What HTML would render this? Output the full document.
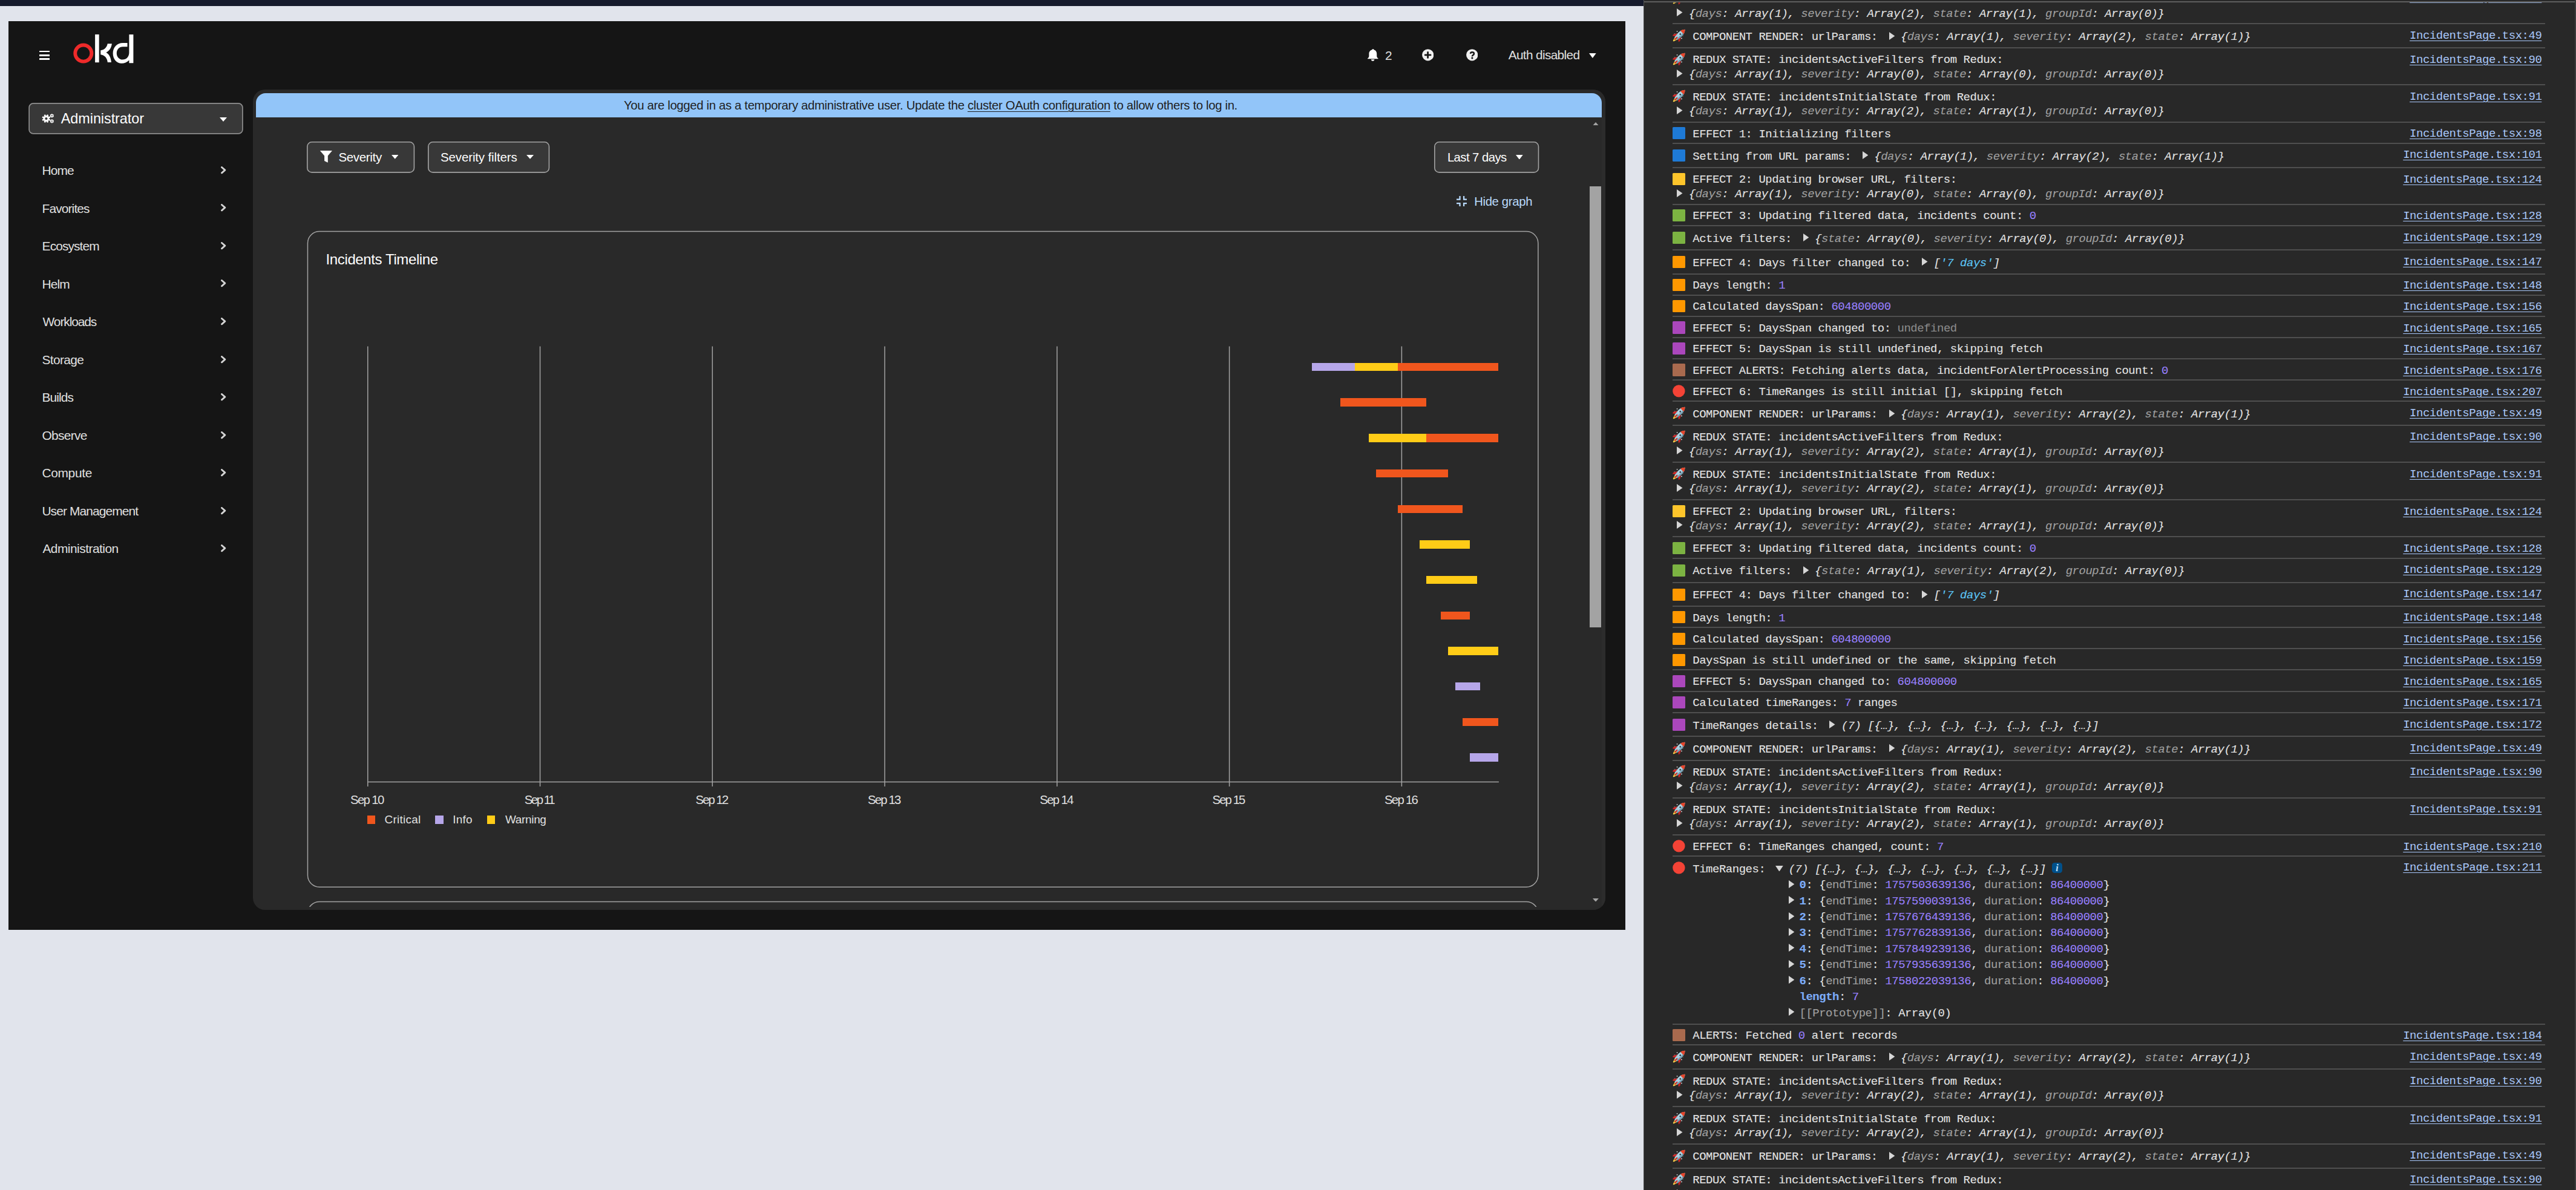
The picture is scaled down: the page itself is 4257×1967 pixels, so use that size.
<!DOCTYPE html>
<html><head><meta charset="utf-8"><title>OKD Incidents</title>
<style>
html,body{margin:0;padding:0}
body{width:4257px;height:1967px;position:relative;overflow:hidden;background:#e1e4ec;font-family:'Liberation Sans', sans-serif}
</style></head><body>
<div style="position:absolute;left:0;top:0;width:2716px;height:10.4px;background:#161a2c"></div>
<div style="position:absolute;left:14.00px;top:35.00px;width:2672.00px;height:1502.00px;background:#151515"></div>
<div style="position:absolute;left:64.80px;top:83.60px;width:17.30px;height:2.90px;background:#fff;border-radius:0.5px"></div>
<div style="position:absolute;left:64.80px;top:89.80px;width:17.30px;height:2.90px;background:#fff;border-radius:0.5px"></div>
<div style="position:absolute;left:64.80px;top:95.90px;width:17.30px;height:2.90px;background:#fff;border-radius:0.5px"></div>
<svg style="position:absolute;left:0;top:0" width="240" height="120" viewBox="0 0 240 120">
<circle cx="137.8" cy="88.1" r="13.55" fill="none" stroke="#ee2a2a" stroke-width="5.9"/>
<rect x="157.1" y="56.9" width="6.6" height="46.3" fill="#fff"/>
<path d="M166.3 83.2 C171.8 82.6 176.8 78.5 177.7 72.2 L184.9 72.2 C184 79.5 180.2 84.4 175.4 86.7 C180.3 89.3 183.4 95.5 183.9 102.9 L177.8 102.9 C177.2 95.8 172.6 90.9 166.3 90.3 Z" fill="#fff"/>
<path d="M213.4 57 L220.4 57 L220.4 104.2 L213.4 104.2 L213.4 99.5 C210 103 205.5 104.8 201 104.8 C192.5 104.8 186.6 97.5 186.6 88 C186.6 78 193.5 71 203 71 L210.5 71 L210.5 77.2 L203 77.2 C197 77.2 192.8 81.8 192.8 88 C192.8 94 197 98.6 202.5 98.6 C209 98.6 213.4 93.5 213.4 87 Z" fill="#fff"/>
</svg>
<svg style="position:absolute;left:2259.7px;top:80.9px" width="18" height="20" viewBox="0 0 18 20">
<path d="M9 0 C9.8 0 10.3 0.6 10.3 1.3 C13.3 2 15.2 4.6 15.2 7.8 L15.2 12 C15.2 13.3 16.5 14.8 17.6 15.6 L17.6 16.3 L0 16.3 L0 15.6 C1.1 14.8 2.4 13.3 2.4 12 L2.4 7.8 C2.4 4.6 4.5 2 7.7 1.3 C7.7 0.6 8.2 0 9 0 Z" fill="#fff"/>
<path d="M5.8 17.2 L11.4 17.2 C11.2 18.8 10.1 19.8 8.6 19.8 C7.1 19.8 6 18.8 5.8 17.2 Z" fill="#fff"/>
</svg>
<div style="position:absolute;left:2289.00px;top:77.09px;font-family:'Liberation Sans', sans-serif;font-size:20.8px;line-height:30px;color:#e0e0e0;font-weight:400;font-style:normal;letter-spacing:0.0px;white-space:pre;">2</div>
<svg style="position:absolute;left:2349.9px;top:81px" width="19.4" height="19.6" viewBox="0 0 19.4 19.6">
<circle cx="9.7" cy="9.8" r="9.65" fill="#f0f0f0"/>
<path d="M5.1 9.9 L14.1 9.9 M9.6 5.3 L9.6 14.5" stroke="#151515" stroke-width="2.7" stroke-linecap="round" fill="none"/>
</svg>
<svg style="position:absolute;left:2422.8px;top:81px" width="19.4" height="19.6" viewBox="0 0 19.4 19.6">
<circle cx="9.7" cy="9.8" r="9.65" fill="#f0f0f0"/>
<path d="M7.1 7.7 C7.1 5.9 8.4 5.2 9.9 5.2 C11.6 5.2 12.9 6.2 12.9 7.7 C12.9 9.2 11.8 9.8 10.9 10.4 C10.2 10.9 9.9 11.3 9.9 12.2" stroke="#151515" stroke-width="2.5" stroke-linecap="butt" fill="none"/>
<circle cx="9.9" cy="14.9" r="1.55" fill="#151515"/>
</svg>
<div style="position:absolute;left:2492.70px;top:76.39px;font-family:'Liberation Sans', sans-serif;font-size:20.8px;line-height:30px;color:#e0e0e0;font-weight:400;font-style:normal;letter-spacing:-0.642px;white-space:pre;">Auth disabled</div>
<svg style="position:absolute;left:2626.00px;top:88.00px" width="11.70" height="8.00" viewBox="0 0 10 6" preserveAspectRatio="none"><path d="M0 0 L10 0 L5 6 Z" fill="#fff"/></svg>
<svg style="position:absolute;left:0;top:0" width="420" height="240"><rect x="48.15" y="170.85" width="352.7" height="50.1" rx="6.8" fill="#383838" stroke="#8f8f8f" stroke-width="1.7"/></svg>
<svg style="position:absolute;left:66px;top:185px" width="24" height="21" viewBox="0 0 24 21">
<defs><mask id="gm"><rect width="24" height="21" fill="#fff"/><circle cx="10.4" cy="11" r="2.1" fill="#000"/><circle cx="19.8" cy="6.3" r="1.05" fill="#000"/><circle cx="19.8" cy="15.3" r="1.05" fill="#000"/></mask></defs>
<g fill="#fff" mask="url(#gm)"><circle cx="10.4" cy="11" r="5.0"/><rect x="9.05" y="4.10" width="2.7" height="2.70" rx="0.4" transform="rotate(22.5 10.4 11)"/><rect x="9.05" y="4.10" width="2.7" height="2.70" rx="0.4" transform="rotate(67.5 10.4 11)"/><rect x="9.05" y="4.10" width="2.7" height="2.70" rx="0.4" transform="rotate(112.5 10.4 11)"/><rect x="9.05" y="4.10" width="2.7" height="2.70" rx="0.4" transform="rotate(157.5 10.4 11)"/><rect x="9.05" y="4.10" width="2.7" height="2.70" rx="0.4" transform="rotate(202.5 10.4 11)"/><rect x="9.05" y="4.10" width="2.7" height="2.70" rx="0.4" transform="rotate(247.5 10.4 11)"/><rect x="9.05" y="4.10" width="2.7" height="2.70" rx="0.4" transform="rotate(292.5 10.4 11)"/><rect x="9.05" y="4.10" width="2.7" height="2.70" rx="0.4" transform="rotate(337.5 10.4 11)"/><circle cx="19.8" cy="6.3" r="2.5"/><rect x="19.05" y="3.00" width="1.5" height="1.60" rx="0.4" transform="rotate(0.0 19.8 6.3)"/><rect x="19.05" y="3.00" width="1.5" height="1.60" rx="0.4" transform="rotate(60.0 19.8 6.3)"/><rect x="19.05" y="3.00" width="1.5" height="1.60" rx="0.4" transform="rotate(120.0 19.8 6.3)"/><rect x="19.05" y="3.00" width="1.5" height="1.60" rx="0.4" transform="rotate(180.0 19.8 6.3)"/><rect x="19.05" y="3.00" width="1.5" height="1.60" rx="0.4" transform="rotate(240.0 19.8 6.3)"/><rect x="19.05" y="3.00" width="1.5" height="1.60" rx="0.4" transform="rotate(300.0 19.8 6.3)"/><circle cx="19.8" cy="15.3" r="2.5"/><rect x="19.05" y="12.00" width="1.5" height="1.60" rx="0.4" transform="rotate(0.0 19.8 15.3)"/><rect x="19.05" y="12.00" width="1.5" height="1.60" rx="0.4" transform="rotate(60.0 19.8 15.3)"/><rect x="19.05" y="12.00" width="1.5" height="1.60" rx="0.4" transform="rotate(120.0 19.8 15.3)"/><rect x="19.05" y="12.00" width="1.5" height="1.60" rx="0.4" transform="rotate(180.0 19.8 15.3)"/><rect x="19.05" y="12.00" width="1.5" height="1.60" rx="0.4" transform="rotate(240.0 19.8 15.3)"/><rect x="19.05" y="12.00" width="1.5" height="1.60" rx="0.4" transform="rotate(300.0 19.8 15.3)"/></g>
</svg>
<div style="position:absolute;left:100.80px;top:180.79px;font-family:'Liberation Sans', sans-serif;font-size:23.4px;line-height:30px;color:#ffffff;font-weight:400;font-style:normal;letter-spacing:-0.05px;white-space:pre;">Administrator</div>
<svg style="position:absolute;left:363.00px;top:193.50px" width="12.00" height="7.00" viewBox="0 0 10 6" preserveAspectRatio="none"><path d="M0 0 L10 0 L5 6 Z" fill="#fff"/></svg>
<div style="position:absolute;left:69.60px;top:266.96px;font-family:'Liberation Sans', sans-serif;font-size:20.9px;line-height:30px;color:#e0e0e0;font-weight:400;font-style:normal;letter-spacing:-0.867px;white-space:pre;">Home</div>
<svg style="position:absolute;left:364.9px;top:274.80px" width="9" height="13" viewBox="0 0 9 13"><path d="M1.5 1.5 L6.8 6.15 L1.5 10.8" fill="none" stroke="#d4d4d4" stroke-width="2.9" stroke-linecap="round" stroke-linejoin="round"/></svg>
<div style="position:absolute;left:69.60px;top:329.51px;font-family:'Liberation Sans', sans-serif;font-size:20.9px;line-height:30px;color:#e0e0e0;font-weight:400;font-style:normal;letter-spacing:-0.875px;white-space:pre;">Favorites</div>
<svg style="position:absolute;left:364.9px;top:337.35px" width="9" height="13" viewBox="0 0 9 13"><path d="M1.5 1.5 L6.8 6.15 L1.5 10.8" fill="none" stroke="#d4d4d4" stroke-width="2.9" stroke-linecap="round" stroke-linejoin="round"/></svg>
<div style="position:absolute;left:69.60px;top:392.06px;font-family:'Liberation Sans', sans-serif;font-size:20.9px;line-height:30px;color:#e0e0e0;font-weight:400;font-style:normal;letter-spacing:-0.9px;white-space:pre;">Ecosystem</div>
<svg style="position:absolute;left:364.9px;top:399.90px" width="9" height="13" viewBox="0 0 9 13"><path d="M1.5 1.5 L6.8 6.15 L1.5 10.8" fill="none" stroke="#d4d4d4" stroke-width="2.9" stroke-linecap="round" stroke-linejoin="round"/></svg>
<div style="position:absolute;left:69.60px;top:454.61px;font-family:'Liberation Sans', sans-serif;font-size:20.9px;line-height:30px;color:#e0e0e0;font-weight:400;font-style:normal;letter-spacing:-0.9px;white-space:pre;">Helm</div>
<svg style="position:absolute;left:364.9px;top:462.45px" width="9" height="13" viewBox="0 0 9 13"><path d="M1.5 1.5 L6.8 6.15 L1.5 10.8" fill="none" stroke="#d4d4d4" stroke-width="2.9" stroke-linecap="round" stroke-linejoin="round"/></svg>
<div style="position:absolute;left:70.60px;top:517.16px;font-family:'Liberation Sans', sans-serif;font-size:20.9px;line-height:30px;color:#e0e0e0;font-weight:400;font-style:normal;letter-spacing:-1.075px;white-space:pre;">Workloads</div>
<svg style="position:absolute;left:364.9px;top:525.00px" width="9" height="13" viewBox="0 0 9 13"><path d="M1.5 1.5 L6.8 6.15 L1.5 10.8" fill="none" stroke="#d4d4d4" stroke-width="2.9" stroke-linecap="round" stroke-linejoin="round"/></svg>
<div style="position:absolute;left:69.60px;top:579.71px;font-family:'Liberation Sans', sans-serif;font-size:20.9px;line-height:30px;color:#e0e0e0;font-weight:400;font-style:normal;letter-spacing:-0.667px;white-space:pre;">Storage</div>
<svg style="position:absolute;left:364.9px;top:587.55px" width="9" height="13" viewBox="0 0 9 13"><path d="M1.5 1.5 L6.8 6.15 L1.5 10.8" fill="none" stroke="#d4d4d4" stroke-width="2.9" stroke-linecap="round" stroke-linejoin="round"/></svg>
<div style="position:absolute;left:69.40px;top:642.26px;font-family:'Liberation Sans', sans-serif;font-size:20.9px;line-height:30px;color:#e0e0e0;font-weight:400;font-style:normal;letter-spacing:-0.88px;white-space:pre;">Builds</div>
<svg style="position:absolute;left:364.9px;top:650.10px" width="9" height="13" viewBox="0 0 9 13"><path d="M1.5 1.5 L6.8 6.15 L1.5 10.8" fill="none" stroke="#d4d4d4" stroke-width="2.9" stroke-linecap="round" stroke-linejoin="round"/></svg>
<div style="position:absolute;left:69.40px;top:704.81px;font-family:'Liberation Sans', sans-serif;font-size:20.9px;line-height:30px;color:#e0e0e0;font-weight:400;font-style:normal;letter-spacing:-0.667px;white-space:pre;">Observe</div>
<svg style="position:absolute;left:364.9px;top:712.65px" width="9" height="13" viewBox="0 0 9 13"><path d="M1.5 1.5 L6.8 6.15 L1.5 10.8" fill="none" stroke="#d4d4d4" stroke-width="2.9" stroke-linecap="round" stroke-linejoin="round"/></svg>
<div style="position:absolute;left:69.40px;top:767.36px;font-family:'Liberation Sans', sans-serif;font-size:20.9px;line-height:30px;color:#e0e0e0;font-weight:400;font-style:normal;letter-spacing:-0.3px;white-space:pre;">Compute</div>
<svg style="position:absolute;left:364.9px;top:775.20px" width="9" height="13" viewBox="0 0 9 13"><path d="M1.5 1.5 L6.8 6.15 L1.5 10.8" fill="none" stroke="#d4d4d4" stroke-width="2.9" stroke-linecap="round" stroke-linejoin="round"/></svg>
<div style="position:absolute;left:69.40px;top:829.91px;font-family:'Liberation Sans', sans-serif;font-size:20.9px;line-height:30px;color:#e0e0e0;font-weight:400;font-style:normal;letter-spacing:-0.871px;white-space:pre;">User Management</div>
<svg style="position:absolute;left:364.9px;top:837.75px" width="9" height="13" viewBox="0 0 9 13"><path d="M1.5 1.5 L6.8 6.15 L1.5 10.8" fill="none" stroke="#d4d4d4" stroke-width="2.9" stroke-linecap="round" stroke-linejoin="round"/></svg>
<div style="position:absolute;left:70.40px;top:892.46px;font-family:'Liberation Sans', sans-serif;font-size:20.9px;line-height:30px;color:#e0e0e0;font-weight:400;font-style:normal;letter-spacing:-0.508px;white-space:pre;">Administration</div>
<svg style="position:absolute;left:364.9px;top:900.30px" width="9" height="13" viewBox="0 0 9 13"><path d="M1.5 1.5 L6.8 6.15 L1.5 10.8" fill="none" stroke="#d4d4d4" stroke-width="2.9" stroke-linecap="round" stroke-linejoin="round"/></svg>
<div style="position:absolute;left:418px;top:147.5px;width:2234.7px;height:1356.4px;background:#292929;border-radius:20px;overflow:hidden"><div style="position:absolute;left:2229.4px;top:46.2px;width:5.3px;height:1400px;background:#2c2c2c"></div></div>
<div style="position:absolute;left:423.4px;top:153.5px;width:2224px;height:40.2px;background:#92c5f9;border-radius:16px 16px 0 0"></div>
<div style="position:absolute;left:1031.00px;top:159.17px;font-family:'Liberation Sans', sans-serif;font-size:20.3px;line-height:30px;color:#1f1f1f;font-weight:400;font-style:normal;letter-spacing:-0.322px;white-space:pre;">You are logged in as a temporary administrative user. Update the <u style="text-decoration-thickness:1px;text-underline-offset:3px">cluster OAuth configuration</u> to allow others to log in.</div>
<svg style="position:absolute;left:2631.8px;top:201.8px" width="10" height="5.6" viewBox="0 0 10 6" preserveAspectRatio="none"><path d="M0 6 L10 6 L5 0 Z" fill="#a3a3a3"/></svg>
<div style="position:absolute;left:2627.40px;top:308.20px;width:18.40px;height:728.80px;background:#a3a3a3"></div>
<svg style="position:absolute;left:2631.70px;top:1484.60px" width="9.90" height="5.60" viewBox="0 0 10 6" preserveAspectRatio="none"><path d="M0 0 L10 0 L5 6 Z" fill="#a3a3a3"/></svg>
<svg style="position:absolute;left:504.9px;top:231.5px" width="182.20" height="55.70"><rect x="2.8" y="2.8" width="176.60" height="50.10" rx="7.5" fill="#383838" stroke="#a3a3a3" stroke-width="1.6"/></svg>
<svg style="position:absolute;left:704.8px;top:231.5px" width="205.20" height="55.70"><rect x="2.8" y="2.8" width="199.60" height="50.10" rx="7.5" fill="#383838" stroke="#a3a3a3" stroke-width="1.6"/></svg>
<svg style="position:absolute;left:2367.6px;top:231.5px" width="177.30" height="55.70"><rect x="2.8" y="2.8" width="171.70" height="50.10" rx="7.5" fill="#383838" stroke="#a3a3a3" stroke-width="1.6"/></svg>
<svg style="position:absolute;left:529.3px;top:249px" width="20" height="20" viewBox="0 0 20 20"><path d="M0.4 0 L19.4 0 Q19.95 0 19.6 0.6 L12.8 8.4 L12.8 19.8 L7.1 16.9 L7.1 8.4 L0.2 0.6 Q-0.15 0 0.4 0 Z" fill="#fff"/></svg>
<div style="position:absolute;left:559.40px;top:244.70px;font-family:'Liberation Sans', sans-serif;font-size:20.5px;line-height:30px;color:#ffffff;font-weight:400;font-style:normal;letter-spacing:-0.314px;white-space:pre;">Severity</div>
<svg style="position:absolute;left:646.70px;top:256.30px" width="11.50" height="6.80" viewBox="0 0 10 6" preserveAspectRatio="none"><path d="M0 0 L10 0 L5 6 Z" fill="#fff"/></svg>
<div style="position:absolute;left:728.00px;top:244.70px;font-family:'Liberation Sans', sans-serif;font-size:20.5px;line-height:30px;color:#ffffff;font-weight:400;font-style:normal;letter-spacing:-0.133px;white-space:pre;">Severity filters</div>
<svg style="position:absolute;left:870.00px;top:256.30px" width="12.00" height="6.80" viewBox="0 0 10 6" preserveAspectRatio="none"><path d="M0 0 L10 0 L5 6 Z" fill="#fff"/></svg>
<div style="position:absolute;left:2391.90px;top:244.57px;font-family:'Liberation Sans', sans-serif;font-size:20.3px;line-height:30px;color:#ffffff;font-weight:400;font-style:normal;letter-spacing:-0.55px;white-space:pre;">Last 7 days</div>
<svg style="position:absolute;left:2505.30px;top:255.50px" width="11.70" height="7.70" viewBox="0 0 10 6" preserveAspectRatio="none"><path d="M0 0 L10 0 L5 6 Z" fill="#fff"/></svg>
<svg style="position:absolute;left:2406.7px;top:323.9px" width="17.6" height="17.6" viewBox="0 0 18 18">
<g fill="#b9dafc">
<path d="M4.5 0 L6.8 0 L6.8 6.8 L0 6.8 L0 4.5 L4.5 4.5 Z"/>
<path d="M11.2 0 L13.5 0 L13.5 4.5 L18 4.5 L18 6.8 L11.2 6.8 Z"/>
<path d="M0 11.2 L6.8 11.2 L6.8 18 L4.5 18 L4.5 13.5 L0 13.5 Z"/>
<path d="M11.2 11.2 L18 11.2 L18 13.5 L13.5 13.5 L13.5 18 L11.2 18 Z"/>
</g></svg>
<div style="position:absolute;left:2436.20px;top:318.47px;font-family:'Liberation Sans', sans-serif;font-size:20.3px;line-height:30px;color:#b9dafc;font-weight:400;font-style:normal;letter-spacing:-0.333px;white-space:pre;">Hide graph</div>
<svg style="position:absolute;left:500px;top:370px" width="2050" height="1110"><rect x="8.45" y="12.45" width="2033.4" height="1083.7" rx="19.5" fill="none" stroke="#a3a3a3" stroke-width="1.5"/></svg>
<div style="position:absolute;left:538.60px;top:414.28px;font-family:'Liberation Sans', sans-serif;font-size:24.0px;line-height:30px;color:#ffffff;font-weight:400;font-style:normal;letter-spacing:-0.388px;white-space:pre;">Incidents Timeline</div>
<svg style="position:absolute;left:0;top:0" width="2600" height="1320"><g stroke="#a3a3a3" stroke-width="1.5" fill="none"><line x1="607.75" y1="572.4" x2="607.75" y2="1300"/><line x1="892.52" y1="572.4" x2="892.52" y2="1300"/><line x1="1177.29" y1="572.4" x2="1177.29" y2="1300"/><line x1="1462.06" y1="572.4" x2="1462.06" y2="1300"/><line x1="1746.83" y1="572.4" x2="1746.83" y2="1300"/><line x1="2031.60" y1="572.4" x2="2031.60" y2="1300"/><line x1="2316.37" y1="572.4" x2="2316.37" y2="1300"/><line x1="607" y1="1292.6" x2="2476.9" y2="1292.6"/></g></svg>
<div style="position:absolute;left:579.00px;top:1307.47px;font-family:'Liberation Sans', sans-serif;font-size:20.3px;line-height:30px;color:#e0e0e0;font-weight:400;font-style:normal;letter-spacing:-1.6px;white-space:pre;">Sep 10</div>
<div style="position:absolute;left:866.70px;top:1307.47px;font-family:'Liberation Sans', sans-serif;font-size:20.3px;line-height:30px;color:#e0e0e0;font-weight:400;font-style:normal;letter-spacing:-2.4px;white-space:pre;">Sep 11</div>
<div style="position:absolute;left:1149.50px;top:1307.47px;font-family:'Liberation Sans', sans-serif;font-size:20.3px;line-height:30px;color:#e0e0e0;font-weight:400;font-style:normal;letter-spacing:-1.9px;white-space:pre;">Sep 12</div>
<div style="position:absolute;left:1434.00px;top:1307.47px;font-family:'Liberation Sans', sans-serif;font-size:20.3px;line-height:30px;color:#e0e0e0;font-weight:400;font-style:normal;letter-spacing:-1.8px;white-space:pre;">Sep 13</div>
<div style="position:absolute;left:1718.20px;top:1307.47px;font-family:'Liberation Sans', sans-serif;font-size:20.3px;line-height:30px;color:#e0e0e0;font-weight:400;font-style:normal;letter-spacing:-1.58px;white-space:pre;">Sep 14</div>
<div style="position:absolute;left:2003.50px;top:1307.47px;font-family:'Liberation Sans', sans-serif;font-size:20.3px;line-height:30px;color:#e0e0e0;font-weight:400;font-style:normal;letter-spacing:-1.88px;white-space:pre;">Sep 15</div>
<div style="position:absolute;left:2288.00px;top:1307.47px;font-family:'Liberation Sans', sans-serif;font-size:20.3px;line-height:30px;color:#e0e0e0;font-weight:400;font-style:normal;letter-spacing:-1.68px;white-space:pre;">Sep 16</div>
<div style="position:absolute;left:606.60px;top:1348.00px;width:13.50px;height:13.50px;background:#f0561d"></div>
<div style="position:absolute;left:635.60px;top:1339.65px;font-family:'Liberation Sans', sans-serif;font-size:18.9px;line-height:30px;color:#e0e0e0;font-weight:400;font-style:normal;letter-spacing:0.257px;white-space:pre;">Critical</div>
<div style="position:absolute;left:719.30px;top:1348.00px;width:13.50px;height:13.50px;background:#b6a6e9"></div>
<div style="position:absolute;left:748.30px;top:1339.65px;font-family:'Liberation Sans', sans-serif;font-size:18.9px;line-height:30px;color:#e0e0e0;font-weight:400;font-style:normal;letter-spacing:0.233px;white-space:pre;">Info</div>
<div style="position:absolute;left:804.90px;top:1348.00px;width:13.50px;height:13.50px;background:#ffcc17"></div>
<div style="position:absolute;left:835.00px;top:1339.65px;font-family:'Liberation Sans', sans-serif;font-size:18.9px;line-height:30px;color:#e0e0e0;font-weight:400;font-style:normal;letter-spacing:-0.3px;white-space:pre;">Warning</div>
<div style="position:absolute;left:2167.60px;top:599.80px;width:71.10px;height:13.40px;background:#b6a6e9"></div>
<div style="position:absolute;left:2238.70px;top:599.80px;width:71.30px;height:13.40px;background:#ffcc17"></div>
<div style="position:absolute;left:2310.00px;top:599.80px;width:166.00px;height:13.40px;background:#f0561d"></div>
<div style="position:absolute;left:2215.00px;top:658.49px;width:142.40px;height:13.40px;background:#f0561d"></div>
<div style="position:absolute;left:2262.00px;top:717.18px;width:95.20px;height:13.40px;background:#ffcc17"></div>
<div style="position:absolute;left:2357.20px;top:717.18px;width:118.80px;height:13.40px;background:#f0561d"></div>
<div style="position:absolute;left:2274.00px;top:775.87px;width:119.00px;height:13.40px;background:#f0561d"></div>
<div style="position:absolute;left:2309.90px;top:834.56px;width:106.80px;height:13.40px;background:#f0561d"></div>
<div style="position:absolute;left:2345.70px;top:893.25px;width:83.10px;height:13.40px;background:#ffcc17"></div>
<div style="position:absolute;left:2357.30px;top:951.94px;width:83.40px;height:13.40px;background:#ffcc17"></div>
<div style="position:absolute;left:2381.00px;top:1010.63px;width:47.80px;height:13.40px;background:#f0561d"></div>
<div style="position:absolute;left:2393.00px;top:1069.32px;width:83.00px;height:13.40px;background:#ffcc17"></div>
<div style="position:absolute;left:2404.60px;top:1128.01px;width:41.90px;height:13.40px;background:#b6a6e9"></div>
<div style="position:absolute;left:2416.70px;top:1186.70px;width:59.30px;height:13.40px;background:#f0561d"></div>
<div style="position:absolute;left:2428.60px;top:1245.39px;width:47.40px;height:13.40px;background:#b6a6e9"></div>
<svg style="position:absolute;left:500px;top:1480px" width="2050" height="18.9"><rect x="8.45" y="10.4" width="2033.4" height="300" rx="19.5" fill="none" stroke="#a3a3a3" stroke-width="1.5"/></svg>
<div style="position:absolute;left:2716px;top:0;width:1541px;height:1967px;background:#282828;overflow:hidden">
</div>
<div style="position:absolute;left:2716.00px;top:0.00px;width:1.20px;height:1967.00px;background:#4f4f4f"></div>
<div style="position:absolute;left:2717.00px;top:2.00px;width:1540.00px;height:2.20px;background:#5e5e5e"></div>
<div style="position:absolute;left:4254.50px;top:0.00px;width:2.50px;height:1967.00px;background:#3c3c3c"></div>
<div style="position:absolute;left:0;top:0;width:4257px;height:1967px;clip-path:inset(4.2px 0 0 2717.2px)">
<div style="position:absolute;left:2763.60px;top:7.54px;font-family:'Liberation Mono', monospace;font-size:19.0px;letter-spacing:-0.492px;line-height:30px;white-space:pre;color:#e3e3e3;-webkit-text-stroke:0.1px"><span style="display:inline-block;width:27.2px;height:1px;position:relative"><svg style="position:absolute;left:7.9px;top:-12.5px" width="9.5" height="13" viewBox="0 0 10 14" preserveAspectRatio="none"><path d="M0 0 L10 7 L0 14 Z" fill="#d6d6d6"/></svg></span><span style="color:#e3e3e3;font-style:italic;">{</span><span style="color:#a0a0a0;font-style:italic;">days</span><span style="color:#e3e3e3;font-style:italic;">: </span><span style="color:#e3e3e3;font-style:italic;">Array(1)</span><span style="color:#e3e3e3;font-style:italic;">, </span><span style="color:#a0a0a0;font-style:italic;">severity</span><span style="color:#e3e3e3;font-style:italic;">: </span><span style="color:#e3e3e3;font-style:italic;">Array(2)</span><span style="color:#e3e3e3;font-style:italic;">, </span><span style="color:#a0a0a0;font-style:italic;">state</span><span style="color:#e3e3e3;font-style:italic;">: </span><span style="color:#e3e3e3;font-style:italic;">Array(1)</span><span style="color:#e3e3e3;font-style:italic;">, </span><span style="color:#a0a0a0;font-style:italic;">groupId</span><span style="color:#e3e3e3;font-style:italic;">: </span><span style="color:#e3e3e3;font-style:italic;">Array(0)</span><span style="color:#e3e3e3;font-style:italic;">}</span></div>
<div style="position:absolute;left:3982.10px;top:-19.36px;font-family:'Liberation Mono', monospace;font-size:19.0px;letter-spacing:-0.492px;line-height:30px;white-space:pre;color:#a8c7fa;text-decoration:underline;text-decoration-thickness:1px;text-underline-offset:2.5px">IncidentsPage.tsx:91</div>
<svg style="position:absolute;left:2761.8px;top:-15.20px" width="23" height="23" viewBox="0 0 23 23">
<circle cx="9.6" cy="4.8" r="0.9" fill="#e8e8e8"/><circle cx="5.3" cy="8.6" r="0.7" fill="#9a9a9a"/><circle cx="7.6" cy="8.4" r="0.5" fill="#777"/><circle cx="16.9" cy="16.4" r="0.9" fill="#e8e8e8"/><circle cx="19.1" cy="12.2" r="0.6" fill="#888"/>
<g transform="translate(13.6,10.6) rotate(45) scale(0.93)">
<path d="M-4.3 0.5 L-8.2 7 L-7.8 10.2 L-3.6 7.2 Z" fill="#d42a2a"/>
<path d="M4.3 0.5 L8.2 7 L7.8 10.2 L3.6 7.2 Z" fill="#c62323"/>
<path d="M-2.9 9 L2.9 9 L0.8 15.8 L-0.8 15.8 Z" fill="#fcd94a"/>
<path d="M0 -13.5 C3.2 -10.5 4.5 -5.5 4.5 -1 L3.4 9.2 L-3.4 9.2 L-4.5 -1 C-4.5 -5.5 -3.2 -10.5 0 -13.5 Z" fill="#a9d2e3"/>
<path d="M0.6 -12.8 C3.3 -9.8 4.5 -5.2 4.5 -1 L3.4 9.2 L1.2 9.2 C2.2 3 2.2 -6 0.6 -12.8 Z" fill="#6f9fb5"/>
<path d="M0 -13.5 C2.3 -11.3 3.6 -8.8 4.1 -6.2 L-4.1 -6.2 C-3.6 -8.8 -2.3 -11.3 0 -13.5 Z" fill="#e5452b"/>
<circle cx="0" cy="-1.8" r="2.1" fill="#2a4858" stroke="#d8ecf3" stroke-width="0.9"/>
<path d="M-1.1 5.5 L1.1 5.5 L1.1 12.5 L-1.1 12.5 Z" fill="#cf2a2a"/>
</g>
</svg>
<div style="position:absolute;left:2763.60px;top:38.00px;width:1442.60px;height:2.00px;background:#4f4f4f"></div>
<svg style="position:absolute;left:2761.8px;top:47.30px" width="23" height="23" viewBox="0 0 23 23">
<circle cx="9.6" cy="4.8" r="0.9" fill="#e8e8e8"/><circle cx="5.3" cy="8.6" r="0.7" fill="#9a9a9a"/><circle cx="7.6" cy="8.4" r="0.5" fill="#777"/><circle cx="16.9" cy="16.4" r="0.9" fill="#e8e8e8"/><circle cx="19.1" cy="12.2" r="0.6" fill="#888"/>
<g transform="translate(13.6,10.6) rotate(45) scale(0.93)">
<path d="M-4.3 0.5 L-8.2 7 L-7.8 10.2 L-3.6 7.2 Z" fill="#d42a2a"/>
<path d="M4.3 0.5 L8.2 7 L7.8 10.2 L3.6 7.2 Z" fill="#c62323"/>
<path d="M-2.9 9 L2.9 9 L0.8 15.8 L-0.8 15.8 Z" fill="#fcd94a"/>
<path d="M0 -13.5 C3.2 -10.5 4.5 -5.5 4.5 -1 L3.4 9.2 L-3.4 9.2 L-4.5 -1 C-4.5 -5.5 -3.2 -10.5 0 -13.5 Z" fill="#a9d2e3"/>
<path d="M0.6 -12.8 C3.3 -9.8 4.5 -5.2 4.5 -1 L3.4 9.2 L1.2 9.2 C2.2 3 2.2 -6 0.6 -12.8 Z" fill="#6f9fb5"/>
<path d="M0 -13.5 C2.3 -11.3 3.6 -8.8 4.1 -6.2 L-4.1 -6.2 C-3.6 -8.8 -2.3 -11.3 0 -13.5 Z" fill="#e5452b"/>
<circle cx="0" cy="-1.8" r="2.1" fill="#2a4858" stroke="#d8ecf3" stroke-width="0.9"/>
<path d="M-1.1 5.5 L1.1 5.5 L1.1 12.5 L-1.1 12.5 Z" fill="#cf2a2a"/>
</g>
</svg>
<div style="position:absolute;left:2797.30px;top:46.04px;font-family:'Liberation Mono', monospace;font-size:19.0px;letter-spacing:-0.492px;line-height:30px;white-space:pre;color:#e3e3e3;-webkit-text-stroke:0.1px"><span style="color:#e3e3e3;">COMPONENT RENDER: urlParams: </span><span style="display:inline-block;width:27.2px;height:1px;position:relative"><svg style="position:absolute;left:7.9px;top:-12.5px" width="9.5" height="13" viewBox="0 0 10 14" preserveAspectRatio="none"><path d="M0 0 L10 7 L0 14 Z" fill="#d6d6d6"/></svg></span><span style="color:#e3e3e3;font-style:italic;">{</span><span style="color:#a0a0a0;font-style:italic;">days</span><span style="color:#e3e3e3;font-style:italic;">: </span><span style="color:#e3e3e3;font-style:italic;">Array(1)</span><span style="color:#e3e3e3;font-style:italic;">, </span><span style="color:#a0a0a0;font-style:italic;">severity</span><span style="color:#e3e3e3;font-style:italic;">: </span><span style="color:#e3e3e3;font-style:italic;">Array(2)</span><span style="color:#e3e3e3;font-style:italic;">, </span><span style="color:#a0a0a0;font-style:italic;">state</span><span style="color:#e3e3e3;font-style:italic;">: </span><span style="color:#e3e3e3;font-style:italic;">Array(1)</span><span style="color:#e3e3e3;font-style:italic;">}</span></div>
<div style="position:absolute;left:3982.10px;top:43.94px;font-family:'Liberation Mono', monospace;font-size:19.0px;letter-spacing:-0.492px;line-height:30px;white-space:pre;color:#a8c7fa;text-decoration:underline;text-decoration-thickness:1px;text-underline-offset:2.5px">IncidentsPage.tsx:49</div>
<div style="position:absolute;left:2763.60px;top:78.00px;width:1442.60px;height:2.00px;background:#4f4f4f"></div>
<svg style="position:absolute;left:2761.8px;top:85.90px" width="23" height="23" viewBox="0 0 23 23">
<circle cx="9.6" cy="4.8" r="0.9" fill="#e8e8e8"/><circle cx="5.3" cy="8.6" r="0.7" fill="#9a9a9a"/><circle cx="7.6" cy="8.4" r="0.5" fill="#777"/><circle cx="16.9" cy="16.4" r="0.9" fill="#e8e8e8"/><circle cx="19.1" cy="12.2" r="0.6" fill="#888"/>
<g transform="translate(13.6,10.6) rotate(45) scale(0.93)">
<path d="M-4.3 0.5 L-8.2 7 L-7.8 10.2 L-3.6 7.2 Z" fill="#d42a2a"/>
<path d="M4.3 0.5 L8.2 7 L7.8 10.2 L3.6 7.2 Z" fill="#c62323"/>
<path d="M-2.9 9 L2.9 9 L0.8 15.8 L-0.8 15.8 Z" fill="#fcd94a"/>
<path d="M0 -13.5 C3.2 -10.5 4.5 -5.5 4.5 -1 L3.4 9.2 L-3.4 9.2 L-4.5 -1 C-4.5 -5.5 -3.2 -10.5 0 -13.5 Z" fill="#a9d2e3"/>
<path d="M0.6 -12.8 C3.3 -9.8 4.5 -5.2 4.5 -1 L3.4 9.2 L1.2 9.2 C2.2 3 2.2 -6 0.6 -12.8 Z" fill="#6f9fb5"/>
<path d="M0 -13.5 C2.3 -11.3 3.6 -8.8 4.1 -6.2 L-4.1 -6.2 C-3.6 -8.8 -2.3 -11.3 0 -13.5 Z" fill="#e5452b"/>
<circle cx="0" cy="-1.8" r="2.1" fill="#2a4858" stroke="#d8ecf3" stroke-width="0.9"/>
<path d="M-1.1 5.5 L1.1 5.5 L1.1 12.5 L-1.1 12.5 Z" fill="#cf2a2a"/>
</g>
</svg>
<div style="position:absolute;left:2797.30px;top:84.34px;font-family:'Liberation Mono', monospace;font-size:19.0px;letter-spacing:-0.492px;line-height:30px;white-space:pre;color:#e3e3e3;-webkit-text-stroke:0.1px"><span style="color:#e3e3e3;">REDUX STATE: incidentsActiveFilters from Redux:</span></div>
<div style="position:absolute;left:2763.60px;top:108.14px;font-family:'Liberation Mono', monospace;font-size:19.0px;letter-spacing:-0.492px;line-height:30px;white-space:pre;color:#e3e3e3;-webkit-text-stroke:0.1px"><span style="display:inline-block;width:27.2px;height:1px;position:relative"><svg style="position:absolute;left:7.9px;top:-12.5px" width="9.5" height="13" viewBox="0 0 10 14" preserveAspectRatio="none"><path d="M0 0 L10 7 L0 14 Z" fill="#d6d6d6"/></svg></span><span style="color:#e3e3e3;font-style:italic;">{</span><span style="color:#a0a0a0;font-style:italic;">days</span><span style="color:#e3e3e3;font-style:italic;">: </span><span style="color:#e3e3e3;font-style:italic;">Array(1)</span><span style="color:#e3e3e3;font-style:italic;">, </span><span style="color:#a0a0a0;font-style:italic;">severity</span><span style="color:#e3e3e3;font-style:italic;">: </span><span style="color:#e3e3e3;font-style:italic;">Array(0)</span><span style="color:#e3e3e3;font-style:italic;">, </span><span style="color:#a0a0a0;font-style:italic;">state</span><span style="color:#e3e3e3;font-style:italic;">: </span><span style="color:#e3e3e3;font-style:italic;">Array(0)</span><span style="color:#e3e3e3;font-style:italic;">, </span><span style="color:#a0a0a0;font-style:italic;">groupId</span><span style="color:#e3e3e3;font-style:italic;">: </span><span style="color:#e3e3e3;font-style:italic;">Array(0)</span><span style="color:#e3e3e3;font-style:italic;">}</span></div>
<div style="position:absolute;left:3982.10px;top:83.74px;font-family:'Liberation Mono', monospace;font-size:19.0px;letter-spacing:-0.492px;line-height:30px;white-space:pre;color:#a8c7fa;text-decoration:underline;text-decoration-thickness:1px;text-underline-offset:2.5px">IncidentsPage.tsx:90</div>
<div style="position:absolute;left:2763.60px;top:139.00px;width:1442.60px;height:2.00px;background:#4f4f4f"></div>
<svg style="position:absolute;left:2761.8px;top:147.10px" width="23" height="23" viewBox="0 0 23 23">
<circle cx="9.6" cy="4.8" r="0.9" fill="#e8e8e8"/><circle cx="5.3" cy="8.6" r="0.7" fill="#9a9a9a"/><circle cx="7.6" cy="8.4" r="0.5" fill="#777"/><circle cx="16.9" cy="16.4" r="0.9" fill="#e8e8e8"/><circle cx="19.1" cy="12.2" r="0.6" fill="#888"/>
<g transform="translate(13.6,10.6) rotate(45) scale(0.93)">
<path d="M-4.3 0.5 L-8.2 7 L-7.8 10.2 L-3.6 7.2 Z" fill="#d42a2a"/>
<path d="M4.3 0.5 L8.2 7 L7.8 10.2 L3.6 7.2 Z" fill="#c62323"/>
<path d="M-2.9 9 L2.9 9 L0.8 15.8 L-0.8 15.8 Z" fill="#fcd94a"/>
<path d="M0 -13.5 C3.2 -10.5 4.5 -5.5 4.5 -1 L3.4 9.2 L-3.4 9.2 L-4.5 -1 C-4.5 -5.5 -3.2 -10.5 0 -13.5 Z" fill="#a9d2e3"/>
<path d="M0.6 -12.8 C3.3 -9.8 4.5 -5.2 4.5 -1 L3.4 9.2 L1.2 9.2 C2.2 3 2.2 -6 0.6 -12.8 Z" fill="#6f9fb5"/>
<path d="M0 -13.5 C2.3 -11.3 3.6 -8.8 4.1 -6.2 L-4.1 -6.2 C-3.6 -8.8 -2.3 -11.3 0 -13.5 Z" fill="#e5452b"/>
<circle cx="0" cy="-1.8" r="2.1" fill="#2a4858" stroke="#d8ecf3" stroke-width="0.9"/>
<path d="M-1.1 5.5 L1.1 5.5 L1.1 12.5 L-1.1 12.5 Z" fill="#cf2a2a"/>
</g>
</svg>
<div style="position:absolute;left:2797.30px;top:145.54px;font-family:'Liberation Mono', monospace;font-size:19.0px;letter-spacing:-0.492px;line-height:30px;white-space:pre;color:#e3e3e3;-webkit-text-stroke:0.1px"><span style="color:#e3e3e3;">REDUX STATE: incidentsInitialState from Redux:</span></div>
<div style="position:absolute;left:2763.60px;top:169.34px;font-family:'Liberation Mono', monospace;font-size:19.0px;letter-spacing:-0.492px;line-height:30px;white-space:pre;color:#e3e3e3;-webkit-text-stroke:0.1px"><span style="display:inline-block;width:27.2px;height:1px;position:relative"><svg style="position:absolute;left:7.9px;top:-12.5px" width="9.5" height="13" viewBox="0 0 10 14" preserveAspectRatio="none"><path d="M0 0 L10 7 L0 14 Z" fill="#d6d6d6"/></svg></span><span style="color:#e3e3e3;font-style:italic;">{</span><span style="color:#a0a0a0;font-style:italic;">days</span><span style="color:#e3e3e3;font-style:italic;">: </span><span style="color:#e3e3e3;font-style:italic;">Array(1)</span><span style="color:#e3e3e3;font-style:italic;">, </span><span style="color:#a0a0a0;font-style:italic;">severity</span><span style="color:#e3e3e3;font-style:italic;">: </span><span style="color:#e3e3e3;font-style:italic;">Array(2)</span><span style="color:#e3e3e3;font-style:italic;">, </span><span style="color:#a0a0a0;font-style:italic;">state</span><span style="color:#e3e3e3;font-style:italic;">: </span><span style="color:#e3e3e3;font-style:italic;">Array(1)</span><span style="color:#e3e3e3;font-style:italic;">, </span><span style="color:#a0a0a0;font-style:italic;">groupId</span><span style="color:#e3e3e3;font-style:italic;">: </span><span style="color:#e3e3e3;font-style:italic;">Array(0)</span><span style="color:#e3e3e3;font-style:italic;">}</span></div>
<div style="position:absolute;left:3982.10px;top:144.94px;font-family:'Liberation Mono', monospace;font-size:19.0px;letter-spacing:-0.492px;line-height:30px;white-space:pre;color:#a8c7fa;text-decoration:underline;text-decoration-thickness:1px;text-underline-offset:2.5px">IncidentsPage.tsx:91</div>
<div style="position:absolute;left:2763.60px;top:201.00px;width:1442.60px;height:2.00px;background:#4f4f4f"></div>
<div style="position:absolute;left:2764.2px;top:210.10px;width:20.8px;height:20.3px;background:#1e7ad6;border-radius:1.6px"></div>
<div style="position:absolute;left:2797.30px;top:206.54px;font-family:'Liberation Mono', monospace;font-size:19.0px;letter-spacing:-0.492px;line-height:30px;white-space:pre;color:#e3e3e3;-webkit-text-stroke:0.1px"><span style="color:#e3e3e3;">EFFECT 1: Initializing filters</span></div>
<div style="position:absolute;left:3982.10px;top:206.34px;font-family:'Liberation Mono', monospace;font-size:19.0px;letter-spacing:-0.492px;line-height:30px;white-space:pre;color:#a8c7fa;text-decoration:underline;text-decoration-thickness:1px;text-underline-offset:2.5px">IncidentsPage.tsx:98</div>
<div style="position:absolute;left:2763.60px;top:236.00px;width:1442.60px;height:2.00px;background:#4f4f4f"></div>
<div style="position:absolute;left:2764.2px;top:246.90px;width:20.8px;height:20.3px;background:#1e7ad6;border-radius:1.6px"></div>
<div style="position:absolute;left:2797.30px;top:243.54px;font-family:'Liberation Mono', monospace;font-size:19.0px;letter-spacing:-0.492px;line-height:30px;white-space:pre;color:#e3e3e3;-webkit-text-stroke:0.1px"><span style="color:#e3e3e3;">Setting from URL params: </span><span style="display:inline-block;width:27.2px;height:1px;position:relative"><svg style="position:absolute;left:7.9px;top:-12.5px" width="9.5" height="13" viewBox="0 0 10 14" preserveAspectRatio="none"><path d="M0 0 L10 7 L0 14 Z" fill="#d6d6d6"/></svg></span><span style="color:#e3e3e3;font-style:italic;">{</span><span style="color:#a0a0a0;font-style:italic;">days</span><span style="color:#e3e3e3;font-style:italic;">: </span><span style="color:#e3e3e3;font-style:italic;">Array(1)</span><span style="color:#e3e3e3;font-style:italic;">, </span><span style="color:#a0a0a0;font-style:italic;">severity</span><span style="color:#e3e3e3;font-style:italic;">: </span><span style="color:#e3e3e3;font-style:italic;">Array(2)</span><span style="color:#e3e3e3;font-style:italic;">, </span><span style="color:#a0a0a0;font-style:italic;">state</span><span style="color:#e3e3e3;font-style:italic;">: </span><span style="color:#e3e3e3;font-style:italic;">Array(1)</span><span style="color:#e3e3e3;font-style:italic;">}</span></div>
<div style="position:absolute;left:3971.19px;top:241.44px;font-family:'Liberation Mono', monospace;font-size:19.0px;letter-spacing:-0.492px;line-height:30px;white-space:pre;color:#a8c7fa;text-decoration:underline;text-decoration-thickness:1px;text-underline-offset:2.5px">IncidentsPage.tsx:101</div>
<div style="position:absolute;left:2763.60px;top:276.00px;width:1442.60px;height:2.00px;background:#4f4f4f"></div>
<div style="position:absolute;left:2764.2px;top:285.90px;width:20.8px;height:20.3px;background:#fdc52b;border-radius:1.6px"></div>
<div style="position:absolute;left:2797.30px;top:282.24px;font-family:'Liberation Mono', monospace;font-size:19.0px;letter-spacing:-0.492px;line-height:30px;white-space:pre;color:#e3e3e3;-webkit-text-stroke:0.1px"><span style="color:#e3e3e3;">EFFECT 2: Updating browser URL, filters:</span></div>
<div style="position:absolute;left:2763.60px;top:306.04px;font-family:'Liberation Mono', monospace;font-size:19.0px;letter-spacing:-0.492px;line-height:30px;white-space:pre;color:#e3e3e3;-webkit-text-stroke:0.1px"><span style="display:inline-block;width:27.2px;height:1px;position:relative"><svg style="position:absolute;left:7.9px;top:-12.5px" width="9.5" height="13" viewBox="0 0 10 14" preserveAspectRatio="none"><path d="M0 0 L10 7 L0 14 Z" fill="#d6d6d6"/></svg></span><span style="color:#e3e3e3;font-style:italic;">{</span><span style="color:#a0a0a0;font-style:italic;">days</span><span style="color:#e3e3e3;font-style:italic;">: </span><span style="color:#e3e3e3;font-style:italic;">Array(1)</span><span style="color:#e3e3e3;font-style:italic;">, </span><span style="color:#a0a0a0;font-style:italic;">severity</span><span style="color:#e3e3e3;font-style:italic;">: </span><span style="color:#e3e3e3;font-style:italic;">Array(0)</span><span style="color:#e3e3e3;font-style:italic;">, </span><span style="color:#a0a0a0;font-style:italic;">state</span><span style="color:#e3e3e3;font-style:italic;">: </span><span style="color:#e3e3e3;font-style:italic;">Array(0)</span><span style="color:#e3e3e3;font-style:italic;">, </span><span style="color:#a0a0a0;font-style:italic;">groupId</span><span style="color:#e3e3e3;font-style:italic;">: </span><span style="color:#e3e3e3;font-style:italic;">Array(0)</span><span style="color:#e3e3e3;font-style:italic;">}</span></div>
<div style="position:absolute;left:3971.19px;top:281.64px;font-family:'Liberation Mono', monospace;font-size:19.0px;letter-spacing:-0.492px;line-height:30px;white-space:pre;color:#a8c7fa;text-decoration:underline;text-decoration-thickness:1px;text-underline-offset:2.5px">IncidentsPage.tsx:124</div>
<div style="position:absolute;left:2763.60px;top:337.00px;width:1442.60px;height:2.00px;background:#4f4f4f"></div>
<div style="position:absolute;left:2764.2px;top:345.90px;width:20.8px;height:20.3px;background:#7cb342;border-radius:1.6px"></div>
<div style="position:absolute;left:2797.30px;top:342.34px;font-family:'Liberation Mono', monospace;font-size:19.0px;letter-spacing:-0.492px;line-height:30px;white-space:pre;color:#e3e3e3;-webkit-text-stroke:0.1px"><span style="color:#e3e3e3;">EFFECT 3: Updating filtered data, incidents count: </span><span style="color:#9980ff;">0</span></div>
<div style="position:absolute;left:3971.19px;top:342.14px;font-family:'Liberation Mono', monospace;font-size:19.0px;letter-spacing:-0.492px;line-height:30px;white-space:pre;color:#a8c7fa;text-decoration:underline;text-decoration-thickness:1px;text-underline-offset:2.5px">IncidentsPage.tsx:128</div>
<div style="position:absolute;left:2763.60px;top:372.00px;width:1442.60px;height:2.00px;background:#4f4f4f"></div>
<div style="position:absolute;left:2764.2px;top:383.00px;width:20.8px;height:20.3px;background:#7cb342;border-radius:1.6px"></div>
<div style="position:absolute;left:2797.30px;top:379.64px;font-family:'Liberation Mono', monospace;font-size:19.0px;letter-spacing:-0.492px;line-height:30px;white-space:pre;color:#e3e3e3;-webkit-text-stroke:0.1px"><span style="color:#e3e3e3;">Active filters: </span><span style="display:inline-block;width:27.2px;height:1px;position:relative"><svg style="position:absolute;left:7.9px;top:-12.5px" width="9.5" height="13" viewBox="0 0 10 14" preserveAspectRatio="none"><path d="M0 0 L10 7 L0 14 Z" fill="#d6d6d6"/></svg></span><span style="color:#e3e3e3;font-style:italic;">{</span><span style="color:#a0a0a0;font-style:italic;">state</span><span style="color:#e3e3e3;font-style:italic;">: </span><span style="color:#e3e3e3;font-style:italic;">Array(0)</span><span style="color:#e3e3e3;font-style:italic;">, </span><span style="color:#a0a0a0;font-style:italic;">severity</span><span style="color:#e3e3e3;font-style:italic;">: </span><span style="color:#e3e3e3;font-style:italic;">Array(0)</span><span style="color:#e3e3e3;font-style:italic;">, </span><span style="color:#a0a0a0;font-style:italic;">groupId</span><span style="color:#e3e3e3;font-style:italic;">: </span><span style="color:#e3e3e3;font-style:italic;">Array(0)</span><span style="color:#e3e3e3;font-style:italic;">}</span></div>
<div style="position:absolute;left:3971.19px;top:377.54px;font-family:'Liberation Mono', monospace;font-size:19.0px;letter-spacing:-0.492px;line-height:30px;white-space:pre;color:#a8c7fa;text-decoration:underline;text-decoration-thickness:1px;text-underline-offset:2.5px">IncidentsPage.tsx:129</div>
<div style="position:absolute;left:2763.60px;top:412.00px;width:1442.60px;height:2.00px;background:#4f4f4f"></div>
<div style="position:absolute;left:2764.2px;top:423.10px;width:20.8px;height:20.3px;background:#ff9800;border-radius:1.6px"></div>
<div style="position:absolute;left:2797.30px;top:419.74px;font-family:'Liberation Mono', monospace;font-size:19.0px;letter-spacing:-0.492px;line-height:30px;white-space:pre;color:#e3e3e3;-webkit-text-stroke:0.1px"><span style="color:#e3e3e3;">EFFECT 4: Days filter changed to: </span><span style="display:inline-block;width:27.2px;height:1px;position:relative"><svg style="position:absolute;left:7.9px;top:-12.5px" width="9.5" height="13" viewBox="0 0 10 14" preserveAspectRatio="none"><path d="M0 0 L10 7 L0 14 Z" fill="#d6d6d6"/></svg></span><span style="color:#e3e3e3;font-style:italic;">[</span><span style="color:#5cc6f7;font-style:italic;">&#x27;7 days&#x27;</span><span style="color:#e3e3e3;font-style:italic;">]</span></div>
<div style="position:absolute;left:3971.19px;top:417.64px;font-family:'Liberation Mono', monospace;font-size:19.0px;letter-spacing:-0.492px;line-height:30px;white-space:pre;color:#a8c7fa;text-decoration:underline;text-decoration-thickness:1px;text-underline-offset:2.5px">IncidentsPage.tsx:147</div>
<div style="position:absolute;left:2763.60px;top:452.00px;width:1442.60px;height:2.00px;background:#4f4f4f"></div>
<div style="position:absolute;left:2764.2px;top:460.90px;width:20.8px;height:20.3px;background:#ff9800;border-radius:1.6px"></div>
<div style="position:absolute;left:2797.30px;top:457.34px;font-family:'Liberation Mono', monospace;font-size:19.0px;letter-spacing:-0.492px;line-height:30px;white-space:pre;color:#e3e3e3;-webkit-text-stroke:0.1px"><span style="color:#e3e3e3;">Days length: </span><span style="color:#9980ff;">1</span></div>
<div style="position:absolute;left:3971.19px;top:457.14px;font-family:'Liberation Mono', monospace;font-size:19.0px;letter-spacing:-0.492px;line-height:30px;white-space:pre;color:#a8c7fa;text-decoration:underline;text-decoration-thickness:1px;text-underline-offset:2.5px">IncidentsPage.tsx:148</div>
<div style="position:absolute;left:2763.60px;top:487.00px;width:1442.60px;height:2.00px;background:#4f4f4f"></div>
<div style="position:absolute;left:2764.2px;top:495.90px;width:20.8px;height:20.3px;background:#ff9800;border-radius:1.6px"></div>
<div style="position:absolute;left:2797.30px;top:492.34px;font-family:'Liberation Mono', monospace;font-size:19.0px;letter-spacing:-0.492px;line-height:30px;white-space:pre;color:#e3e3e3;-webkit-text-stroke:0.1px"><span style="color:#e3e3e3;">Calculated daysSpan: </span><span style="color:#9980ff;">604800000</span></div>
<div style="position:absolute;left:3971.19px;top:492.14px;font-family:'Liberation Mono', monospace;font-size:19.0px;letter-spacing:-0.492px;line-height:30px;white-space:pre;color:#a8c7fa;text-decoration:underline;text-decoration-thickness:1px;text-underline-offset:2.5px">IncidentsPage.tsx:156</div>
<div style="position:absolute;left:2763.60px;top:522.00px;width:1442.60px;height:2.00px;background:#4f4f4f"></div>
<div style="position:absolute;left:2764.2px;top:531.40px;width:20.8px;height:20.3px;background:#ab47bc;border-radius:1.6px"></div>
<div style="position:absolute;left:2797.30px;top:527.84px;font-family:'Liberation Mono', monospace;font-size:19.0px;letter-spacing:-0.492px;line-height:30px;white-space:pre;color:#e3e3e3;-webkit-text-stroke:0.1px"><span style="color:#e3e3e3;">EFFECT 5: DaysSpan changed to: </span><span style="color:#8b8b8b;">undefined</span></div>
<div style="position:absolute;left:3971.19px;top:527.64px;font-family:'Liberation Mono', monospace;font-size:19.0px;letter-spacing:-0.492px;line-height:30px;white-space:pre;color:#a8c7fa;text-decoration:underline;text-decoration-thickness:1px;text-underline-offset:2.5px">IncidentsPage.tsx:165</div>
<div style="position:absolute;left:2763.60px;top:557.00px;width:1442.60px;height:2.00px;background:#4f4f4f"></div>
<div style="position:absolute;left:2764.2px;top:565.90px;width:20.8px;height:20.3px;background:#ab47bc;border-radius:1.6px"></div>
<div style="position:absolute;left:2797.30px;top:562.34px;font-family:'Liberation Mono', monospace;font-size:19.0px;letter-spacing:-0.492px;line-height:30px;white-space:pre;color:#e3e3e3;-webkit-text-stroke:0.1px"><span style="color:#e3e3e3;">EFFECT 5: DaysSpan is still undefined, skipping fetch</span></div>
<div style="position:absolute;left:3971.19px;top:562.14px;font-family:'Liberation Mono', monospace;font-size:19.0px;letter-spacing:-0.492px;line-height:30px;white-space:pre;color:#a8c7fa;text-decoration:underline;text-decoration-thickness:1px;text-underline-offset:2.5px">IncidentsPage.tsx:167</div>
<div style="position:absolute;left:2763.60px;top:592.00px;width:1442.60px;height:2.00px;background:#4f4f4f"></div>
<div style="position:absolute;left:2764.2px;top:601.30px;width:20.8px;height:20.3px;background:#a96a4e;border-radius:1.6px"></div>
<div style="position:absolute;left:2797.30px;top:597.74px;font-family:'Liberation Mono', monospace;font-size:19.0px;letter-spacing:-0.492px;line-height:30px;white-space:pre;color:#e3e3e3;-webkit-text-stroke:0.1px"><span style="color:#e3e3e3;">EFFECT ALERTS: Fetching alerts data, incidentForAlertProcessing count: </span><span style="color:#9980ff;">0</span></div>
<div style="position:absolute;left:3971.19px;top:597.54px;font-family:'Liberation Mono', monospace;font-size:19.0px;letter-spacing:-0.492px;line-height:30px;white-space:pre;color:#a8c7fa;text-decoration:underline;text-decoration-thickness:1px;text-underline-offset:2.5px">IncidentsPage.tsx:176</div>
<div style="position:absolute;left:2763.60px;top:627.00px;width:1442.60px;height:2.00px;background:#4f4f4f"></div>
<svg style="position:absolute;left:2764.1px;top:636.40px" width="20.8" height="20.8" viewBox="0 0 20.8 20.8"><circle cx="10.4" cy="10.4" r="10.2" fill="#f44336"/></svg>
<div style="position:absolute;left:2797.30px;top:633.04px;font-family:'Liberation Mono', monospace;font-size:19.0px;letter-spacing:-0.492px;line-height:30px;white-space:pre;color:#e3e3e3;-webkit-text-stroke:0.1px"><span style="color:#e3e3e3;">EFFECT 6: TimeRanges is still initial [], skipping fetch</span></div>
<div style="position:absolute;left:3971.19px;top:632.84px;font-family:'Liberation Mono', monospace;font-size:19.0px;letter-spacing:-0.492px;line-height:30px;white-space:pre;color:#a8c7fa;text-decoration:underline;text-decoration-thickness:1px;text-underline-offset:2.5px">IncidentsPage.tsx:207</div>
<div style="position:absolute;left:2763.60px;top:662.00px;width:1442.60px;height:2.00px;background:#4f4f4f"></div>
<svg style="position:absolute;left:2761.8px;top:671.30px" width="23" height="23" viewBox="0 0 23 23">
<circle cx="9.6" cy="4.8" r="0.9" fill="#e8e8e8"/><circle cx="5.3" cy="8.6" r="0.7" fill="#9a9a9a"/><circle cx="7.6" cy="8.4" r="0.5" fill="#777"/><circle cx="16.9" cy="16.4" r="0.9" fill="#e8e8e8"/><circle cx="19.1" cy="12.2" r="0.6" fill="#888"/>
<g transform="translate(13.6,10.6) rotate(45) scale(0.93)">
<path d="M-4.3 0.5 L-8.2 7 L-7.8 10.2 L-3.6 7.2 Z" fill="#d42a2a"/>
<path d="M4.3 0.5 L8.2 7 L7.8 10.2 L3.6 7.2 Z" fill="#c62323"/>
<path d="M-2.9 9 L2.9 9 L0.8 15.8 L-0.8 15.8 Z" fill="#fcd94a"/>
<path d="M0 -13.5 C3.2 -10.5 4.5 -5.5 4.5 -1 L3.4 9.2 L-3.4 9.2 L-4.5 -1 C-4.5 -5.5 -3.2 -10.5 0 -13.5 Z" fill="#a9d2e3"/>
<path d="M0.6 -12.8 C3.3 -9.8 4.5 -5.2 4.5 -1 L3.4 9.2 L1.2 9.2 C2.2 3 2.2 -6 0.6 -12.8 Z" fill="#6f9fb5"/>
<path d="M0 -13.5 C2.3 -11.3 3.6 -8.8 4.1 -6.2 L-4.1 -6.2 C-3.6 -8.8 -2.3 -11.3 0 -13.5 Z" fill="#e5452b"/>
<circle cx="0" cy="-1.8" r="2.1" fill="#2a4858" stroke="#d8ecf3" stroke-width="0.9"/>
<path d="M-1.1 5.5 L1.1 5.5 L1.1 12.5 L-1.1 12.5 Z" fill="#cf2a2a"/>
</g>
</svg>
<div style="position:absolute;left:2797.30px;top:670.04px;font-family:'Liberation Mono', monospace;font-size:19.0px;letter-spacing:-0.492px;line-height:30px;white-space:pre;color:#e3e3e3;-webkit-text-stroke:0.1px"><span style="color:#e3e3e3;">COMPONENT RENDER: urlParams: </span><span style="display:inline-block;width:27.2px;height:1px;position:relative"><svg style="position:absolute;left:7.9px;top:-12.5px" width="9.5" height="13" viewBox="0 0 10 14" preserveAspectRatio="none"><path d="M0 0 L10 7 L0 14 Z" fill="#d6d6d6"/></svg></span><span style="color:#e3e3e3;font-style:italic;">{</span><span style="color:#a0a0a0;font-style:italic;">days</span><span style="color:#e3e3e3;font-style:italic;">: </span><span style="color:#e3e3e3;font-style:italic;">Array(1)</span><span style="color:#e3e3e3;font-style:italic;">, </span><span style="color:#a0a0a0;font-style:italic;">severity</span><span style="color:#e3e3e3;font-style:italic;">: </span><span style="color:#e3e3e3;font-style:italic;">Array(2)</span><span style="color:#e3e3e3;font-style:italic;">, </span><span style="color:#a0a0a0;font-style:italic;">state</span><span style="color:#e3e3e3;font-style:italic;">: </span><span style="color:#e3e3e3;font-style:italic;">Array(1)</span><span style="color:#e3e3e3;font-style:italic;">}</span></div>
<div style="position:absolute;left:3982.10px;top:667.94px;font-family:'Liberation Mono', monospace;font-size:19.0px;letter-spacing:-0.492px;line-height:30px;white-space:pre;color:#a8c7fa;text-decoration:underline;text-decoration-thickness:1px;text-underline-offset:2.5px">IncidentsPage.tsx:49</div>
<div style="position:absolute;left:2763.60px;top:702.00px;width:1442.60px;height:2.00px;background:#4f4f4f"></div>
<svg style="position:absolute;left:2761.8px;top:709.50px" width="23" height="23" viewBox="0 0 23 23">
<circle cx="9.6" cy="4.8" r="0.9" fill="#e8e8e8"/><circle cx="5.3" cy="8.6" r="0.7" fill="#9a9a9a"/><circle cx="7.6" cy="8.4" r="0.5" fill="#777"/><circle cx="16.9" cy="16.4" r="0.9" fill="#e8e8e8"/><circle cx="19.1" cy="12.2" r="0.6" fill="#888"/>
<g transform="translate(13.6,10.6) rotate(45) scale(0.93)">
<path d="M-4.3 0.5 L-8.2 7 L-7.8 10.2 L-3.6 7.2 Z" fill="#d42a2a"/>
<path d="M4.3 0.5 L8.2 7 L7.8 10.2 L3.6 7.2 Z" fill="#c62323"/>
<path d="M-2.9 9 L2.9 9 L0.8 15.8 L-0.8 15.8 Z" fill="#fcd94a"/>
<path d="M0 -13.5 C3.2 -10.5 4.5 -5.5 4.5 -1 L3.4 9.2 L-3.4 9.2 L-4.5 -1 C-4.5 -5.5 -3.2 -10.5 0 -13.5 Z" fill="#a9d2e3"/>
<path d="M0.6 -12.8 C3.3 -9.8 4.5 -5.2 4.5 -1 L3.4 9.2 L1.2 9.2 C2.2 3 2.2 -6 0.6 -12.8 Z" fill="#6f9fb5"/>
<path d="M0 -13.5 C2.3 -11.3 3.6 -8.8 4.1 -6.2 L-4.1 -6.2 C-3.6 -8.8 -2.3 -11.3 0 -13.5 Z" fill="#e5452b"/>
<circle cx="0" cy="-1.8" r="2.1" fill="#2a4858" stroke="#d8ecf3" stroke-width="0.9"/>
<path d="M-1.1 5.5 L1.1 5.5 L1.1 12.5 L-1.1 12.5 Z" fill="#cf2a2a"/>
</g>
</svg>
<div style="position:absolute;left:2797.30px;top:707.94px;font-family:'Liberation Mono', monospace;font-size:19.0px;letter-spacing:-0.492px;line-height:30px;white-space:pre;color:#e3e3e3;-webkit-text-stroke:0.1px"><span style="color:#e3e3e3;">REDUX STATE: incidentsActiveFilters from Redux:</span></div>
<div style="position:absolute;left:2763.60px;top:731.74px;font-family:'Liberation Mono', monospace;font-size:19.0px;letter-spacing:-0.492px;line-height:30px;white-space:pre;color:#e3e3e3;-webkit-text-stroke:0.1px"><span style="display:inline-block;width:27.2px;height:1px;position:relative"><svg style="position:absolute;left:7.9px;top:-12.5px" width="9.5" height="13" viewBox="0 0 10 14" preserveAspectRatio="none"><path d="M0 0 L10 7 L0 14 Z" fill="#d6d6d6"/></svg></span><span style="color:#e3e3e3;font-style:italic;">{</span><span style="color:#a0a0a0;font-style:italic;">days</span><span style="color:#e3e3e3;font-style:italic;">: </span><span style="color:#e3e3e3;font-style:italic;">Array(1)</span><span style="color:#e3e3e3;font-style:italic;">, </span><span style="color:#a0a0a0;font-style:italic;">severity</span><span style="color:#e3e3e3;font-style:italic;">: </span><span style="color:#e3e3e3;font-style:italic;">Array(2)</span><span style="color:#e3e3e3;font-style:italic;">, </span><span style="color:#a0a0a0;font-style:italic;">state</span><span style="color:#e3e3e3;font-style:italic;">: </span><span style="color:#e3e3e3;font-style:italic;">Array(1)</span><span style="color:#e3e3e3;font-style:italic;">, </span><span style="color:#a0a0a0;font-style:italic;">groupId</span><span style="color:#e3e3e3;font-style:italic;">: </span><span style="color:#e3e3e3;font-style:italic;">Array(0)</span><span style="color:#e3e3e3;font-style:italic;">}</span></div>
<div style="position:absolute;left:3982.10px;top:707.34px;font-family:'Liberation Mono', monospace;font-size:19.0px;letter-spacing:-0.492px;line-height:30px;white-space:pre;color:#a8c7fa;text-decoration:underline;text-decoration-thickness:1px;text-underline-offset:2.5px">IncidentsPage.tsx:90</div>
<div style="position:absolute;left:2763.60px;top:763.00px;width:1442.60px;height:2.00px;background:#4f4f4f"></div>
<svg style="position:absolute;left:2761.8px;top:771.10px" width="23" height="23" viewBox="0 0 23 23">
<circle cx="9.6" cy="4.8" r="0.9" fill="#e8e8e8"/><circle cx="5.3" cy="8.6" r="0.7" fill="#9a9a9a"/><circle cx="7.6" cy="8.4" r="0.5" fill="#777"/><circle cx="16.9" cy="16.4" r="0.9" fill="#e8e8e8"/><circle cx="19.1" cy="12.2" r="0.6" fill="#888"/>
<g transform="translate(13.6,10.6) rotate(45) scale(0.93)">
<path d="M-4.3 0.5 L-8.2 7 L-7.8 10.2 L-3.6 7.2 Z" fill="#d42a2a"/>
<path d="M4.3 0.5 L8.2 7 L7.8 10.2 L3.6 7.2 Z" fill="#c62323"/>
<path d="M-2.9 9 L2.9 9 L0.8 15.8 L-0.8 15.8 Z" fill="#fcd94a"/>
<path d="M0 -13.5 C3.2 -10.5 4.5 -5.5 4.5 -1 L3.4 9.2 L-3.4 9.2 L-4.5 -1 C-4.5 -5.5 -3.2 -10.5 0 -13.5 Z" fill="#a9d2e3"/>
<path d="M0.6 -12.8 C3.3 -9.8 4.5 -5.2 4.5 -1 L3.4 9.2 L1.2 9.2 C2.2 3 2.2 -6 0.6 -12.8 Z" fill="#6f9fb5"/>
<path d="M0 -13.5 C2.3 -11.3 3.6 -8.8 4.1 -6.2 L-4.1 -6.2 C-3.6 -8.8 -2.3 -11.3 0 -13.5 Z" fill="#e5452b"/>
<circle cx="0" cy="-1.8" r="2.1" fill="#2a4858" stroke="#d8ecf3" stroke-width="0.9"/>
<path d="M-1.1 5.5 L1.1 5.5 L1.1 12.5 L-1.1 12.5 Z" fill="#cf2a2a"/>
</g>
</svg>
<div style="position:absolute;left:2797.30px;top:769.54px;font-family:'Liberation Mono', monospace;font-size:19.0px;letter-spacing:-0.492px;line-height:30px;white-space:pre;color:#e3e3e3;-webkit-text-stroke:0.1px"><span style="color:#e3e3e3;">REDUX STATE: incidentsInitialState from Redux:</span></div>
<div style="position:absolute;left:2763.60px;top:793.34px;font-family:'Liberation Mono', monospace;font-size:19.0px;letter-spacing:-0.492px;line-height:30px;white-space:pre;color:#e3e3e3;-webkit-text-stroke:0.1px"><span style="display:inline-block;width:27.2px;height:1px;position:relative"><svg style="position:absolute;left:7.9px;top:-12.5px" width="9.5" height="13" viewBox="0 0 10 14" preserveAspectRatio="none"><path d="M0 0 L10 7 L0 14 Z" fill="#d6d6d6"/></svg></span><span style="color:#e3e3e3;font-style:italic;">{</span><span style="color:#a0a0a0;font-style:italic;">days</span><span style="color:#e3e3e3;font-style:italic;">: </span><span style="color:#e3e3e3;font-style:italic;">Array(1)</span><span style="color:#e3e3e3;font-style:italic;">, </span><span style="color:#a0a0a0;font-style:italic;">severity</span><span style="color:#e3e3e3;font-style:italic;">: </span><span style="color:#e3e3e3;font-style:italic;">Array(2)</span><span style="color:#e3e3e3;font-style:italic;">, </span><span style="color:#a0a0a0;font-style:italic;">state</span><span style="color:#e3e3e3;font-style:italic;">: </span><span style="color:#e3e3e3;font-style:italic;">Array(1)</span><span style="color:#e3e3e3;font-style:italic;">, </span><span style="color:#a0a0a0;font-style:italic;">groupId</span><span style="color:#e3e3e3;font-style:italic;">: </span><span style="color:#e3e3e3;font-style:italic;">Array(0)</span><span style="color:#e3e3e3;font-style:italic;">}</span></div>
<div style="position:absolute;left:3982.10px;top:768.94px;font-family:'Liberation Mono', monospace;font-size:19.0px;letter-spacing:-0.492px;line-height:30px;white-space:pre;color:#a8c7fa;text-decoration:underline;text-decoration-thickness:1px;text-underline-offset:2.5px">IncidentsPage.tsx:91</div>
<div style="position:absolute;left:2763.60px;top:825.00px;width:1442.60px;height:2.00px;background:#4f4f4f"></div>
<div style="position:absolute;left:2764.2px;top:834.85px;width:20.8px;height:20.3px;background:#fdc52b;border-radius:1.6px"></div>
<div style="position:absolute;left:2797.30px;top:831.19px;font-family:'Liberation Mono', monospace;font-size:19.0px;letter-spacing:-0.492px;line-height:30px;white-space:pre;color:#e3e3e3;-webkit-text-stroke:0.1px"><span style="color:#e3e3e3;">EFFECT 2: Updating browser URL, filters:</span></div>
<div style="position:absolute;left:2763.60px;top:854.99px;font-family:'Liberation Mono', monospace;font-size:19.0px;letter-spacing:-0.492px;line-height:30px;white-space:pre;color:#e3e3e3;-webkit-text-stroke:0.1px"><span style="display:inline-block;width:27.2px;height:1px;position:relative"><svg style="position:absolute;left:7.9px;top:-12.5px" width="9.5" height="13" viewBox="0 0 10 14" preserveAspectRatio="none"><path d="M0 0 L10 7 L0 14 Z" fill="#d6d6d6"/></svg></span><span style="color:#e3e3e3;font-style:italic;">{</span><span style="color:#a0a0a0;font-style:italic;">days</span><span style="color:#e3e3e3;font-style:italic;">: </span><span style="color:#e3e3e3;font-style:italic;">Array(1)</span><span style="color:#e3e3e3;font-style:italic;">, </span><span style="color:#a0a0a0;font-style:italic;">severity</span><span style="color:#e3e3e3;font-style:italic;">: </span><span style="color:#e3e3e3;font-style:italic;">Array(2)</span><span style="color:#e3e3e3;font-style:italic;">, </span><span style="color:#a0a0a0;font-style:italic;">state</span><span style="color:#e3e3e3;font-style:italic;">: </span><span style="color:#e3e3e3;font-style:italic;">Array(1)</span><span style="color:#e3e3e3;font-style:italic;">, </span><span style="color:#a0a0a0;font-style:italic;">groupId</span><span style="color:#e3e3e3;font-style:italic;">: </span><span style="color:#e3e3e3;font-style:italic;">Array(0)</span><span style="color:#e3e3e3;font-style:italic;">}</span></div>
<div style="position:absolute;left:3971.19px;top:830.59px;font-family:'Liberation Mono', monospace;font-size:19.0px;letter-spacing:-0.492px;line-height:30px;white-space:pre;color:#a8c7fa;text-decoration:underline;text-decoration-thickness:1px;text-underline-offset:2.5px">IncidentsPage.tsx:124</div>
<div style="position:absolute;left:2763.60px;top:886.00px;width:1442.60px;height:2.00px;background:#4f4f4f"></div>
<div style="position:absolute;left:2764.2px;top:895.50px;width:20.8px;height:20.3px;background:#7cb342;border-radius:1.6px"></div>
<div style="position:absolute;left:2797.30px;top:891.94px;font-family:'Liberation Mono', monospace;font-size:19.0px;letter-spacing:-0.492px;line-height:30px;white-space:pre;color:#e3e3e3;-webkit-text-stroke:0.1px"><span style="color:#e3e3e3;">EFFECT 3: Updating filtered data, incidents count: </span><span style="color:#9980ff;">0</span></div>
<div style="position:absolute;left:3971.19px;top:891.74px;font-family:'Liberation Mono', monospace;font-size:19.0px;letter-spacing:-0.492px;line-height:30px;white-space:pre;color:#a8c7fa;text-decoration:underline;text-decoration-thickness:1px;text-underline-offset:2.5px">IncidentsPage.tsx:128</div>
<div style="position:absolute;left:2763.60px;top:922.00px;width:1442.60px;height:2.00px;background:#4f4f4f"></div>
<div style="position:absolute;left:2764.2px;top:932.70px;width:20.8px;height:20.3px;background:#7cb342;border-radius:1.6px"></div>
<div style="position:absolute;left:2797.30px;top:929.34px;font-family:'Liberation Mono', monospace;font-size:19.0px;letter-spacing:-0.492px;line-height:30px;white-space:pre;color:#e3e3e3;-webkit-text-stroke:0.1px"><span style="color:#e3e3e3;">Active filters: </span><span style="display:inline-block;width:27.2px;height:1px;position:relative"><svg style="position:absolute;left:7.9px;top:-12.5px" width="9.5" height="13" viewBox="0 0 10 14" preserveAspectRatio="none"><path d="M0 0 L10 7 L0 14 Z" fill="#d6d6d6"/></svg></span><span style="color:#e3e3e3;font-style:italic;">{</span><span style="color:#a0a0a0;font-style:italic;">state</span><span style="color:#e3e3e3;font-style:italic;">: </span><span style="color:#e3e3e3;font-style:italic;">Array(1)</span><span style="color:#e3e3e3;font-style:italic;">, </span><span style="color:#a0a0a0;font-style:italic;">severity</span><span style="color:#e3e3e3;font-style:italic;">: </span><span style="color:#e3e3e3;font-style:italic;">Array(2)</span><span style="color:#e3e3e3;font-style:italic;">, </span><span style="color:#a0a0a0;font-style:italic;">groupId</span><span style="color:#e3e3e3;font-style:italic;">: </span><span style="color:#e3e3e3;font-style:italic;">Array(0)</span><span style="color:#e3e3e3;font-style:italic;">}</span></div>
<div style="position:absolute;left:3971.19px;top:927.24px;font-family:'Liberation Mono', monospace;font-size:19.0px;letter-spacing:-0.492px;line-height:30px;white-space:pre;color:#a8c7fa;text-decoration:underline;text-decoration-thickness:1px;text-underline-offset:2.5px">IncidentsPage.tsx:129</div>
<div style="position:absolute;left:2763.60px;top:962.00px;width:1442.60px;height:2.00px;background:#4f4f4f"></div>
<div style="position:absolute;left:2764.2px;top:972.50px;width:20.8px;height:20.3px;background:#ff9800;border-radius:1.6px"></div>
<div style="position:absolute;left:2797.30px;top:969.14px;font-family:'Liberation Mono', monospace;font-size:19.0px;letter-spacing:-0.492px;line-height:30px;white-space:pre;color:#e3e3e3;-webkit-text-stroke:0.1px"><span style="color:#e3e3e3;">EFFECT 4: Days filter changed to: </span><span style="display:inline-block;width:27.2px;height:1px;position:relative"><svg style="position:absolute;left:7.9px;top:-12.5px" width="9.5" height="13" viewBox="0 0 10 14" preserveAspectRatio="none"><path d="M0 0 L10 7 L0 14 Z" fill="#d6d6d6"/></svg></span><span style="color:#e3e3e3;font-style:italic;">[</span><span style="color:#5cc6f7;font-style:italic;">&#x27;7 days&#x27;</span><span style="color:#e3e3e3;font-style:italic;">]</span></div>
<div style="position:absolute;left:3971.19px;top:967.04px;font-family:'Liberation Mono', monospace;font-size:19.0px;letter-spacing:-0.492px;line-height:30px;white-space:pre;color:#a8c7fa;text-decoration:underline;text-decoration-thickness:1px;text-underline-offset:2.5px">IncidentsPage.tsx:147</div>
<div style="position:absolute;left:2763.60px;top:1001.00px;width:1442.60px;height:2.00px;background:#4f4f4f"></div>
<div style="position:absolute;left:2764.2px;top:1010.10px;width:20.8px;height:20.3px;background:#ff9800;border-radius:1.6px"></div>
<div style="position:absolute;left:2797.30px;top:1006.54px;font-family:'Liberation Mono', monospace;font-size:19.0px;letter-spacing:-0.492px;line-height:30px;white-space:pre;color:#e3e3e3;-webkit-text-stroke:0.1px"><span style="color:#e3e3e3;">Days length: </span><span style="color:#9980ff;">1</span></div>
<div style="position:absolute;left:3971.19px;top:1006.34px;font-family:'Liberation Mono', monospace;font-size:19.0px;letter-spacing:-0.492px;line-height:30px;white-space:pre;color:#a8c7fa;text-decoration:underline;text-decoration-thickness:1px;text-underline-offset:2.5px">IncidentsPage.tsx:148</div>
<div style="position:absolute;left:2763.60px;top:1036.00px;width:1442.60px;height:2.00px;background:#4f4f4f"></div>
<div style="position:absolute;left:2764.2px;top:1045.60px;width:20.8px;height:20.3px;background:#ff9800;border-radius:1.6px"></div>
<div style="position:absolute;left:2797.30px;top:1042.04px;font-family:'Liberation Mono', monospace;font-size:19.0px;letter-spacing:-0.492px;line-height:30px;white-space:pre;color:#e3e3e3;-webkit-text-stroke:0.1px"><span style="color:#e3e3e3;">Calculated daysSpan: </span><span style="color:#9980ff;">604800000</span></div>
<div style="position:absolute;left:3971.19px;top:1041.84px;font-family:'Liberation Mono', monospace;font-size:19.0px;letter-spacing:-0.492px;line-height:30px;white-space:pre;color:#a8c7fa;text-decoration:underline;text-decoration-thickness:1px;text-underline-offset:2.5px">IncidentsPage.tsx:156</div>
<div style="position:absolute;left:2763.60px;top:1071.00px;width:1442.60px;height:2.00px;background:#4f4f4f"></div>
<div style="position:absolute;left:2764.2px;top:1080.60px;width:20.8px;height:20.3px;background:#ff9800;border-radius:1.6px"></div>
<div style="position:absolute;left:2797.30px;top:1077.04px;font-family:'Liberation Mono', monospace;font-size:19.0px;letter-spacing:-0.492px;line-height:30px;white-space:pre;color:#e3e3e3;-webkit-text-stroke:0.1px"><span style="color:#e3e3e3;">DaysSpan is still undefined or the same, skipping fetch</span></div>
<div style="position:absolute;left:3971.19px;top:1076.84px;font-family:'Liberation Mono', monospace;font-size:19.0px;letter-spacing:-0.492px;line-height:30px;white-space:pre;color:#a8c7fa;text-decoration:underline;text-decoration-thickness:1px;text-underline-offset:2.5px">IncidentsPage.tsx:159</div>
<div style="position:absolute;left:2763.60px;top:1106.00px;width:1442.60px;height:2.00px;background:#4f4f4f"></div>
<div style="position:absolute;left:2764.2px;top:1115.50px;width:20.8px;height:20.3px;background:#ab47bc;border-radius:1.6px"></div>
<div style="position:absolute;left:2797.30px;top:1111.94px;font-family:'Liberation Mono', monospace;font-size:19.0px;letter-spacing:-0.492px;line-height:30px;white-space:pre;color:#e3e3e3;-webkit-text-stroke:0.1px"><span style="color:#e3e3e3;">EFFECT 5: DaysSpan changed to: </span><span style="color:#9980ff;">604800000</span></div>
<div style="position:absolute;left:3971.19px;top:1111.74px;font-family:'Liberation Mono', monospace;font-size:19.0px;letter-spacing:-0.492px;line-height:30px;white-space:pre;color:#a8c7fa;text-decoration:underline;text-decoration-thickness:1px;text-underline-offset:2.5px">IncidentsPage.tsx:165</div>
<div style="position:absolute;left:2763.60px;top:1142.00px;width:1442.60px;height:2.00px;background:#4f4f4f"></div>
<div style="position:absolute;left:2764.2px;top:1150.90px;width:20.8px;height:20.3px;background:#ab47bc;border-radius:1.6px"></div>
<div style="position:absolute;left:2797.30px;top:1147.34px;font-family:'Liberation Mono', monospace;font-size:19.0px;letter-spacing:-0.492px;line-height:30px;white-space:pre;color:#e3e3e3;-webkit-text-stroke:0.1px"><span style="color:#e3e3e3;">Calculated timeRanges: </span><span style="color:#9980ff;">7</span><span style="color:#e3e3e3;"> ranges</span></div>
<div style="position:absolute;left:3971.19px;top:1147.14px;font-family:'Liberation Mono', monospace;font-size:19.0px;letter-spacing:-0.492px;line-height:30px;white-space:pre;color:#a8c7fa;text-decoration:underline;text-decoration-thickness:1px;text-underline-offset:2.5px">IncidentsPage.tsx:171</div>
<div style="position:absolute;left:2763.60px;top:1177.00px;width:1442.60px;height:2.00px;background:#4f4f4f"></div>
<div style="position:absolute;left:2764.2px;top:1188.00px;width:20.8px;height:20.3px;background:#ab47bc;border-radius:1.6px"></div>
<div style="position:absolute;left:2797.30px;top:1184.64px;font-family:'Liberation Mono', monospace;font-size:19.0px;letter-spacing:-0.492px;line-height:30px;white-space:pre;color:#e3e3e3;-webkit-text-stroke:0.1px"><span style="color:#e3e3e3;">TimeRanges details: </span><span style="display:inline-block;width:27.2px;height:1px;position:relative"><svg style="position:absolute;left:7.9px;top:-12.5px" width="9.5" height="13" viewBox="0 0 10 14" preserveAspectRatio="none"><path d="M0 0 L10 7 L0 14 Z" fill="#d6d6d6"/></svg></span><span style="color:#e3e3e3;font-style:italic;">(7) [{…}, {…}, {…}, {…}, {…}, {…}, {…}]</span></div>
<div style="position:absolute;left:3971.19px;top:1182.54px;font-family:'Liberation Mono', monospace;font-size:19.0px;letter-spacing:-0.492px;line-height:30px;white-space:pre;color:#a8c7fa;text-decoration:underline;text-decoration-thickness:1px;text-underline-offset:2.5px">IncidentsPage.tsx:172</div>
<div style="position:absolute;left:2763.60px;top:1216.00px;width:1442.60px;height:2.00px;background:#4f4f4f"></div>
<svg style="position:absolute;left:2761.8px;top:1224.90px" width="23" height="23" viewBox="0 0 23 23">
<circle cx="9.6" cy="4.8" r="0.9" fill="#e8e8e8"/><circle cx="5.3" cy="8.6" r="0.7" fill="#9a9a9a"/><circle cx="7.6" cy="8.4" r="0.5" fill="#777"/><circle cx="16.9" cy="16.4" r="0.9" fill="#e8e8e8"/><circle cx="19.1" cy="12.2" r="0.6" fill="#888"/>
<g transform="translate(13.6,10.6) rotate(45) scale(0.93)">
<path d="M-4.3 0.5 L-8.2 7 L-7.8 10.2 L-3.6 7.2 Z" fill="#d42a2a"/>
<path d="M4.3 0.5 L8.2 7 L7.8 10.2 L3.6 7.2 Z" fill="#c62323"/>
<path d="M-2.9 9 L2.9 9 L0.8 15.8 L-0.8 15.8 Z" fill="#fcd94a"/>
<path d="M0 -13.5 C3.2 -10.5 4.5 -5.5 4.5 -1 L3.4 9.2 L-3.4 9.2 L-4.5 -1 C-4.5 -5.5 -3.2 -10.5 0 -13.5 Z" fill="#a9d2e3"/>
<path d="M0.6 -12.8 C3.3 -9.8 4.5 -5.2 4.5 -1 L3.4 9.2 L1.2 9.2 C2.2 3 2.2 -6 0.6 -12.8 Z" fill="#6f9fb5"/>
<path d="M0 -13.5 C2.3 -11.3 3.6 -8.8 4.1 -6.2 L-4.1 -6.2 C-3.6 -8.8 -2.3 -11.3 0 -13.5 Z" fill="#e5452b"/>
<circle cx="0" cy="-1.8" r="2.1" fill="#2a4858" stroke="#d8ecf3" stroke-width="0.9"/>
<path d="M-1.1 5.5 L1.1 5.5 L1.1 12.5 L-1.1 12.5 Z" fill="#cf2a2a"/>
</g>
</svg>
<div style="position:absolute;left:2797.30px;top:1223.64px;font-family:'Liberation Mono', monospace;font-size:19.0px;letter-spacing:-0.492px;line-height:30px;white-space:pre;color:#e3e3e3;-webkit-text-stroke:0.1px"><span style="color:#e3e3e3;">COMPONENT RENDER: urlParams: </span><span style="display:inline-block;width:27.2px;height:1px;position:relative"><svg style="position:absolute;left:7.9px;top:-12.5px" width="9.5" height="13" viewBox="0 0 10 14" preserveAspectRatio="none"><path d="M0 0 L10 7 L0 14 Z" fill="#d6d6d6"/></svg></span><span style="color:#e3e3e3;font-style:italic;">{</span><span style="color:#a0a0a0;font-style:italic;">days</span><span style="color:#e3e3e3;font-style:italic;">: </span><span style="color:#e3e3e3;font-style:italic;">Array(1)</span><span style="color:#e3e3e3;font-style:italic;">, </span><span style="color:#a0a0a0;font-style:italic;">severity</span><span style="color:#e3e3e3;font-style:italic;">: </span><span style="color:#e3e3e3;font-style:italic;">Array(2)</span><span style="color:#e3e3e3;font-style:italic;">, </span><span style="color:#a0a0a0;font-style:italic;">state</span><span style="color:#e3e3e3;font-style:italic;">: </span><span style="color:#e3e3e3;font-style:italic;">Array(1)</span><span style="color:#e3e3e3;font-style:italic;">}</span></div>
<div style="position:absolute;left:3982.10px;top:1221.54px;font-family:'Liberation Mono', monospace;font-size:19.0px;letter-spacing:-0.492px;line-height:30px;white-space:pre;color:#a8c7fa;text-decoration:underline;text-decoration-thickness:1px;text-underline-offset:2.5px">IncidentsPage.tsx:49</div>
<div style="position:absolute;left:2763.60px;top:1256.00px;width:1442.60px;height:2.00px;background:#4f4f4f"></div>
<svg style="position:absolute;left:2761.8px;top:1263.30px" width="23" height="23" viewBox="0 0 23 23">
<circle cx="9.6" cy="4.8" r="0.9" fill="#e8e8e8"/><circle cx="5.3" cy="8.6" r="0.7" fill="#9a9a9a"/><circle cx="7.6" cy="8.4" r="0.5" fill="#777"/><circle cx="16.9" cy="16.4" r="0.9" fill="#e8e8e8"/><circle cx="19.1" cy="12.2" r="0.6" fill="#888"/>
<g transform="translate(13.6,10.6) rotate(45) scale(0.93)">
<path d="M-4.3 0.5 L-8.2 7 L-7.8 10.2 L-3.6 7.2 Z" fill="#d42a2a"/>
<path d="M4.3 0.5 L8.2 7 L7.8 10.2 L3.6 7.2 Z" fill="#c62323"/>
<path d="M-2.9 9 L2.9 9 L0.8 15.8 L-0.8 15.8 Z" fill="#fcd94a"/>
<path d="M0 -13.5 C3.2 -10.5 4.5 -5.5 4.5 -1 L3.4 9.2 L-3.4 9.2 L-4.5 -1 C-4.5 -5.5 -3.2 -10.5 0 -13.5 Z" fill="#a9d2e3"/>
<path d="M0.6 -12.8 C3.3 -9.8 4.5 -5.2 4.5 -1 L3.4 9.2 L1.2 9.2 C2.2 3 2.2 -6 0.6 -12.8 Z" fill="#6f9fb5"/>
<path d="M0 -13.5 C2.3 -11.3 3.6 -8.8 4.1 -6.2 L-4.1 -6.2 C-3.6 -8.8 -2.3 -11.3 0 -13.5 Z" fill="#e5452b"/>
<circle cx="0" cy="-1.8" r="2.1" fill="#2a4858" stroke="#d8ecf3" stroke-width="0.9"/>
<path d="M-1.1 5.5 L1.1 5.5 L1.1 12.5 L-1.1 12.5 Z" fill="#cf2a2a"/>
</g>
</svg>
<div style="position:absolute;left:2797.30px;top:1261.74px;font-family:'Liberation Mono', monospace;font-size:19.0px;letter-spacing:-0.492px;line-height:30px;white-space:pre;color:#e3e3e3;-webkit-text-stroke:0.1px"><span style="color:#e3e3e3;">REDUX STATE: incidentsActiveFilters from Redux:</span></div>
<div style="position:absolute;left:2763.60px;top:1285.54px;font-family:'Liberation Mono', monospace;font-size:19.0px;letter-spacing:-0.492px;line-height:30px;white-space:pre;color:#e3e3e3;-webkit-text-stroke:0.1px"><span style="display:inline-block;width:27.2px;height:1px;position:relative"><svg style="position:absolute;left:7.9px;top:-12.5px" width="9.5" height="13" viewBox="0 0 10 14" preserveAspectRatio="none"><path d="M0 0 L10 7 L0 14 Z" fill="#d6d6d6"/></svg></span><span style="color:#e3e3e3;font-style:italic;">{</span><span style="color:#a0a0a0;font-style:italic;">days</span><span style="color:#e3e3e3;font-style:italic;">: </span><span style="color:#e3e3e3;font-style:italic;">Array(1)</span><span style="color:#e3e3e3;font-style:italic;">, </span><span style="color:#a0a0a0;font-style:italic;">severity</span><span style="color:#e3e3e3;font-style:italic;">: </span><span style="color:#e3e3e3;font-style:italic;">Array(2)</span><span style="color:#e3e3e3;font-style:italic;">, </span><span style="color:#a0a0a0;font-style:italic;">state</span><span style="color:#e3e3e3;font-style:italic;">: </span><span style="color:#e3e3e3;font-style:italic;">Array(1)</span><span style="color:#e3e3e3;font-style:italic;">, </span><span style="color:#a0a0a0;font-style:italic;">groupId</span><span style="color:#e3e3e3;font-style:italic;">: </span><span style="color:#e3e3e3;font-style:italic;">Array(0)</span><span style="color:#e3e3e3;font-style:italic;">}</span></div>
<div style="position:absolute;left:3982.10px;top:1261.14px;font-family:'Liberation Mono', monospace;font-size:19.0px;letter-spacing:-0.492px;line-height:30px;white-space:pre;color:#a8c7fa;text-decoration:underline;text-decoration-thickness:1px;text-underline-offset:2.5px">IncidentsPage.tsx:90</div>
<div style="position:absolute;left:2763.60px;top:1318.00px;width:1442.60px;height:2.00px;background:#4f4f4f"></div>
<svg style="position:absolute;left:2761.8px;top:1325.20px" width="23" height="23" viewBox="0 0 23 23">
<circle cx="9.6" cy="4.8" r="0.9" fill="#e8e8e8"/><circle cx="5.3" cy="8.6" r="0.7" fill="#9a9a9a"/><circle cx="7.6" cy="8.4" r="0.5" fill="#777"/><circle cx="16.9" cy="16.4" r="0.9" fill="#e8e8e8"/><circle cx="19.1" cy="12.2" r="0.6" fill="#888"/>
<g transform="translate(13.6,10.6) rotate(45) scale(0.93)">
<path d="M-4.3 0.5 L-8.2 7 L-7.8 10.2 L-3.6 7.2 Z" fill="#d42a2a"/>
<path d="M4.3 0.5 L8.2 7 L7.8 10.2 L3.6 7.2 Z" fill="#c62323"/>
<path d="M-2.9 9 L2.9 9 L0.8 15.8 L-0.8 15.8 Z" fill="#fcd94a"/>
<path d="M0 -13.5 C3.2 -10.5 4.5 -5.5 4.5 -1 L3.4 9.2 L-3.4 9.2 L-4.5 -1 C-4.5 -5.5 -3.2 -10.5 0 -13.5 Z" fill="#a9d2e3"/>
<path d="M0.6 -12.8 C3.3 -9.8 4.5 -5.2 4.5 -1 L3.4 9.2 L1.2 9.2 C2.2 3 2.2 -6 0.6 -12.8 Z" fill="#6f9fb5"/>
<path d="M0 -13.5 C2.3 -11.3 3.6 -8.8 4.1 -6.2 L-4.1 -6.2 C-3.6 -8.8 -2.3 -11.3 0 -13.5 Z" fill="#e5452b"/>
<circle cx="0" cy="-1.8" r="2.1" fill="#2a4858" stroke="#d8ecf3" stroke-width="0.9"/>
<path d="M-1.1 5.5 L1.1 5.5 L1.1 12.5 L-1.1 12.5 Z" fill="#cf2a2a"/>
</g>
</svg>
<div style="position:absolute;left:2797.30px;top:1323.64px;font-family:'Liberation Mono', monospace;font-size:19.0px;letter-spacing:-0.492px;line-height:30px;white-space:pre;color:#e3e3e3;-webkit-text-stroke:0.1px"><span style="color:#e3e3e3;">REDUX STATE: incidentsInitialState from Redux:</span></div>
<div style="position:absolute;left:2763.60px;top:1347.44px;font-family:'Liberation Mono', monospace;font-size:19.0px;letter-spacing:-0.492px;line-height:30px;white-space:pre;color:#e3e3e3;-webkit-text-stroke:0.1px"><span style="display:inline-block;width:27.2px;height:1px;position:relative"><svg style="position:absolute;left:7.9px;top:-12.5px" width="9.5" height="13" viewBox="0 0 10 14" preserveAspectRatio="none"><path d="M0 0 L10 7 L0 14 Z" fill="#d6d6d6"/></svg></span><span style="color:#e3e3e3;font-style:italic;">{</span><span style="color:#a0a0a0;font-style:italic;">days</span><span style="color:#e3e3e3;font-style:italic;">: </span><span style="color:#e3e3e3;font-style:italic;">Array(1)</span><span style="color:#e3e3e3;font-style:italic;">, </span><span style="color:#a0a0a0;font-style:italic;">severity</span><span style="color:#e3e3e3;font-style:italic;">: </span><span style="color:#e3e3e3;font-style:italic;">Array(2)</span><span style="color:#e3e3e3;font-style:italic;">, </span><span style="color:#a0a0a0;font-style:italic;">state</span><span style="color:#e3e3e3;font-style:italic;">: </span><span style="color:#e3e3e3;font-style:italic;">Array(1)</span><span style="color:#e3e3e3;font-style:italic;">, </span><span style="color:#a0a0a0;font-style:italic;">groupId</span><span style="color:#e3e3e3;font-style:italic;">: </span><span style="color:#e3e3e3;font-style:italic;">Array(0)</span><span style="color:#e3e3e3;font-style:italic;">}</span></div>
<div style="position:absolute;left:3982.10px;top:1323.04px;font-family:'Liberation Mono', monospace;font-size:19.0px;letter-spacing:-0.492px;line-height:30px;white-space:pre;color:#a8c7fa;text-decoration:underline;text-decoration-thickness:1px;text-underline-offset:2.5px">IncidentsPage.tsx:91</div>
<div style="position:absolute;left:2763.60px;top:1379.00px;width:1442.60px;height:2.00px;background:#4f4f4f"></div>
<svg style="position:absolute;left:2764.1px;top:1388.10px" width="20.8" height="20.8" viewBox="0 0 20.8 20.8"><circle cx="10.4" cy="10.4" r="10.2" fill="#f44336"/></svg>
<div style="position:absolute;left:2797.30px;top:1384.74px;font-family:'Liberation Mono', monospace;font-size:19.0px;letter-spacing:-0.492px;line-height:30px;white-space:pre;color:#e3e3e3;-webkit-text-stroke:0.1px"><span style="color:#e3e3e3;">EFFECT 6: TimeRanges changed, count: </span><span style="color:#9980ff;">7</span></div>
<div style="position:absolute;left:3971.19px;top:1384.54px;font-family:'Liberation Mono', monospace;font-size:19.0px;letter-spacing:-0.492px;line-height:30px;white-space:pre;color:#a8c7fa;text-decoration:underline;text-decoration-thickness:1px;text-underline-offset:2.5px">IncidentsPage.tsx:210</div>
<div style="position:absolute;left:2763.60px;top:1414.00px;width:1442.60px;height:2.00px;background:#4f4f4f"></div>
<svg style="position:absolute;left:2764.1px;top:1424.20px" width="20.8" height="20.8" viewBox="0 0 20.8 20.8"><circle cx="10.4" cy="10.4" r="10.2" fill="#f44336"/></svg>
<div style="position:absolute;left:2797.30px;top:1421.64px;font-family:'Liberation Mono', monospace;font-size:19.0px;letter-spacing:-0.492px;line-height:30px;white-space:pre;color:#e3e3e3;-webkit-text-stroke:0.1px"><span style="color:#e3e3e3;">TimeRanges: </span><span style="display:inline-block;width:27.2px;height:1px;position:relative"><svg style="position:absolute;left:6.0px;top:-9.9px" width="12.8" height="9.6" viewBox="0 0 14 10" preserveAspectRatio="none"><path d="M0 0 L14 0 L7 10 Z" fill="#d6d6d6"/></svg></span><span style="color:#e3e3e3;font-style:italic;">(7) [{…}, {…}, {…}, {…}, {…}, {…}, {…}]</span></div>
<div style="position:absolute;left:3390.6px;top:1425.70px;width:17.8px;height:17.4px;background:#01508a;border-radius:4.5px;font-family:'Liberation Serif',serif;font-size:16px;line-height:17.4px;text-align:center;color:#bfe1fb;font-style:italic;font-weight:bold">i</div>
<div style="position:absolute;left:2946.30px;top:1448.14px;font-family:'Liberation Mono', monospace;font-size:19.0px;letter-spacing:-0.492px;line-height:30px;white-space:pre;color:#e3e3e3;-webkit-text-stroke:0.1px"><span style="display:inline-block;width:27.2px;height:1px;position:relative"><svg style="position:absolute;left:9.6px;top:-12.5px" width="9.5" height="13" viewBox="0 0 10 14" preserveAspectRatio="none"><path d="M0 0 L10 7 L0 14 Z" fill="#d6d6d6"/></svg></span><span style="color:#7cacf8;font-weight:bold;">0</span><span style="color:#e3e3e3;">: </span><span style="color:#e3e3e3;">{</span><span style="color:#a0a0a0;">endTime</span><span style="color:#e3e3e3;">: </span><span style="color:#9980ff;">1757503639136</span><span style="color:#e3e3e3;">, </span><span style="color:#a0a0a0;">duration</span><span style="color:#e3e3e3;">: </span><span style="color:#9980ff;">86400000</span><span style="color:#e3e3e3;">}</span></div>
<div style="position:absolute;left:2946.30px;top:1474.59px;font-family:'Liberation Mono', monospace;font-size:19.0px;letter-spacing:-0.492px;line-height:30px;white-space:pre;color:#e3e3e3;-webkit-text-stroke:0.1px"><span style="display:inline-block;width:27.2px;height:1px;position:relative"><svg style="position:absolute;left:9.6px;top:-12.5px" width="9.5" height="13" viewBox="0 0 10 14" preserveAspectRatio="none"><path d="M0 0 L10 7 L0 14 Z" fill="#d6d6d6"/></svg></span><span style="color:#7cacf8;font-weight:bold;">1</span><span style="color:#e3e3e3;">: </span><span style="color:#e3e3e3;">{</span><span style="color:#a0a0a0;">endTime</span><span style="color:#e3e3e3;">: </span><span style="color:#9980ff;">1757590039136</span><span style="color:#e3e3e3;">, </span><span style="color:#a0a0a0;">duration</span><span style="color:#e3e3e3;">: </span><span style="color:#9980ff;">86400000</span><span style="color:#e3e3e3;">}</span></div>
<div style="position:absolute;left:2946.30px;top:1501.04px;font-family:'Liberation Mono', monospace;font-size:19.0px;letter-spacing:-0.492px;line-height:30px;white-space:pre;color:#e3e3e3;-webkit-text-stroke:0.1px"><span style="display:inline-block;width:27.2px;height:1px;position:relative"><svg style="position:absolute;left:9.6px;top:-12.5px" width="9.5" height="13" viewBox="0 0 10 14" preserveAspectRatio="none"><path d="M0 0 L10 7 L0 14 Z" fill="#d6d6d6"/></svg></span><span style="color:#7cacf8;font-weight:bold;">2</span><span style="color:#e3e3e3;">: </span><span style="color:#e3e3e3;">{</span><span style="color:#a0a0a0;">endTime</span><span style="color:#e3e3e3;">: </span><span style="color:#9980ff;">1757676439136</span><span style="color:#e3e3e3;">, </span><span style="color:#a0a0a0;">duration</span><span style="color:#e3e3e3;">: </span><span style="color:#9980ff;">86400000</span><span style="color:#e3e3e3;">}</span></div>
<div style="position:absolute;left:2946.30px;top:1527.49px;font-family:'Liberation Mono', monospace;font-size:19.0px;letter-spacing:-0.492px;line-height:30px;white-space:pre;color:#e3e3e3;-webkit-text-stroke:0.1px"><span style="display:inline-block;width:27.2px;height:1px;position:relative"><svg style="position:absolute;left:9.6px;top:-12.5px" width="9.5" height="13" viewBox="0 0 10 14" preserveAspectRatio="none"><path d="M0 0 L10 7 L0 14 Z" fill="#d6d6d6"/></svg></span><span style="color:#7cacf8;font-weight:bold;">3</span><span style="color:#e3e3e3;">: </span><span style="color:#e3e3e3;">{</span><span style="color:#a0a0a0;">endTime</span><span style="color:#e3e3e3;">: </span><span style="color:#9980ff;">1757762839136</span><span style="color:#e3e3e3;">, </span><span style="color:#a0a0a0;">duration</span><span style="color:#e3e3e3;">: </span><span style="color:#9980ff;">86400000</span><span style="color:#e3e3e3;">}</span></div>
<div style="position:absolute;left:2946.30px;top:1553.94px;font-family:'Liberation Mono', monospace;font-size:19.0px;letter-spacing:-0.492px;line-height:30px;white-space:pre;color:#e3e3e3;-webkit-text-stroke:0.1px"><span style="display:inline-block;width:27.2px;height:1px;position:relative"><svg style="position:absolute;left:9.6px;top:-12.5px" width="9.5" height="13" viewBox="0 0 10 14" preserveAspectRatio="none"><path d="M0 0 L10 7 L0 14 Z" fill="#d6d6d6"/></svg></span><span style="color:#7cacf8;font-weight:bold;">4</span><span style="color:#e3e3e3;">: </span><span style="color:#e3e3e3;">{</span><span style="color:#a0a0a0;">endTime</span><span style="color:#e3e3e3;">: </span><span style="color:#9980ff;">1757849239136</span><span style="color:#e3e3e3;">, </span><span style="color:#a0a0a0;">duration</span><span style="color:#e3e3e3;">: </span><span style="color:#9980ff;">86400000</span><span style="color:#e3e3e3;">}</span></div>
<div style="position:absolute;left:2946.30px;top:1580.39px;font-family:'Liberation Mono', monospace;font-size:19.0px;letter-spacing:-0.492px;line-height:30px;white-space:pre;color:#e3e3e3;-webkit-text-stroke:0.1px"><span style="display:inline-block;width:27.2px;height:1px;position:relative"><svg style="position:absolute;left:9.6px;top:-12.5px" width="9.5" height="13" viewBox="0 0 10 14" preserveAspectRatio="none"><path d="M0 0 L10 7 L0 14 Z" fill="#d6d6d6"/></svg></span><span style="color:#7cacf8;font-weight:bold;">5</span><span style="color:#e3e3e3;">: </span><span style="color:#e3e3e3;">{</span><span style="color:#a0a0a0;">endTime</span><span style="color:#e3e3e3;">: </span><span style="color:#9980ff;">1757935639136</span><span style="color:#e3e3e3;">, </span><span style="color:#a0a0a0;">duration</span><span style="color:#e3e3e3;">: </span><span style="color:#9980ff;">86400000</span><span style="color:#e3e3e3;">}</span></div>
<div style="position:absolute;left:2946.30px;top:1606.84px;font-family:'Liberation Mono', monospace;font-size:19.0px;letter-spacing:-0.492px;line-height:30px;white-space:pre;color:#e3e3e3;-webkit-text-stroke:0.1px"><span style="display:inline-block;width:27.2px;height:1px;position:relative"><svg style="position:absolute;left:9.6px;top:-12.5px" width="9.5" height="13" viewBox="0 0 10 14" preserveAspectRatio="none"><path d="M0 0 L10 7 L0 14 Z" fill="#d6d6d6"/></svg></span><span style="color:#7cacf8;font-weight:bold;">6</span><span style="color:#e3e3e3;">: </span><span style="color:#e3e3e3;">{</span><span style="color:#a0a0a0;">endTime</span><span style="color:#e3e3e3;">: </span><span style="color:#9980ff;">1758022039136</span><span style="color:#e3e3e3;">, </span><span style="color:#a0a0a0;">duration</span><span style="color:#e3e3e3;">: </span><span style="color:#9980ff;">86400000</span><span style="color:#e3e3e3;">}</span></div>
<div style="position:absolute;left:2973.50px;top:1633.29px;font-family:'Liberation Mono', monospace;font-size:19.0px;letter-spacing:-0.492px;line-height:30px;white-space:pre;color:#e3e3e3;-webkit-text-stroke:0.1px"><span style="color:#7cacf8;font-weight:bold;">length</span><span style="color:#e3e3e3;">: </span><span style="color:#9980ff;">7</span></div>
<div style="position:absolute;left:2946.30px;top:1659.74px;font-family:'Liberation Mono', monospace;font-size:19.0px;letter-spacing:-0.492px;line-height:30px;white-space:pre;color:#e3e3e3;-webkit-text-stroke:0.1px"><span style="display:inline-block;width:27.2px;height:1px;position:relative"><svg style="position:absolute;left:9.6px;top:-12.5px" width="9.5" height="13" viewBox="0 0 10 14" preserveAspectRatio="none"><path d="M0 0 L10 7 L0 14 Z" fill="#d6d6d6"/></svg></span><span style="color:#a0a0a0;">[[Prototype]]</span><span style="color:#e3e3e3;">: </span><span style="color:#e3e3e3;">Array(0)</span></div>
<div style="position:absolute;left:3971.19px;top:1419.24px;font-family:'Liberation Mono', monospace;font-size:19.0px;letter-spacing:-0.492px;line-height:30px;white-space:pre;color:#a8c7fa;text-decoration:underline;text-decoration-thickness:1px;text-underline-offset:2.5px">IncidentsPage.tsx:211</div>
<div style="position:absolute;left:2763.60px;top:1692.00px;width:1442.60px;height:2.00px;background:#4f4f4f"></div>
<div style="position:absolute;left:2764.2px;top:1700.80px;width:20.8px;height:20.3px;background:#a96a4e;border-radius:1.6px"></div>
<div style="position:absolute;left:2797.30px;top:1697.24px;font-family:'Liberation Mono', monospace;font-size:19.0px;letter-spacing:-0.492px;line-height:30px;white-space:pre;color:#e3e3e3;-webkit-text-stroke:0.1px"><span style="color:#e3e3e3;">ALERTS: Fetched </span><span style="color:#9980ff;">0</span><span style="color:#e3e3e3;"> alert records</span></div>
<div style="position:absolute;left:3971.19px;top:1697.04px;font-family:'Liberation Mono', monospace;font-size:19.0px;letter-spacing:-0.492px;line-height:30px;white-space:pre;color:#a8c7fa;text-decoration:underline;text-decoration-thickness:1px;text-underline-offset:2.5px">IncidentsPage.tsx:184</div>
<div style="position:absolute;left:2763.60px;top:1726.00px;width:1442.60px;height:2.00px;background:#4f4f4f"></div>
<svg style="position:absolute;left:2761.8px;top:1735.10px" width="23" height="23" viewBox="0 0 23 23">
<circle cx="9.6" cy="4.8" r="0.9" fill="#e8e8e8"/><circle cx="5.3" cy="8.6" r="0.7" fill="#9a9a9a"/><circle cx="7.6" cy="8.4" r="0.5" fill="#777"/><circle cx="16.9" cy="16.4" r="0.9" fill="#e8e8e8"/><circle cx="19.1" cy="12.2" r="0.6" fill="#888"/>
<g transform="translate(13.6,10.6) rotate(45) scale(0.93)">
<path d="M-4.3 0.5 L-8.2 7 L-7.8 10.2 L-3.6 7.2 Z" fill="#d42a2a"/>
<path d="M4.3 0.5 L8.2 7 L7.8 10.2 L3.6 7.2 Z" fill="#c62323"/>
<path d="M-2.9 9 L2.9 9 L0.8 15.8 L-0.8 15.8 Z" fill="#fcd94a"/>
<path d="M0 -13.5 C3.2 -10.5 4.5 -5.5 4.5 -1 L3.4 9.2 L-3.4 9.2 L-4.5 -1 C-4.5 -5.5 -3.2 -10.5 0 -13.5 Z" fill="#a9d2e3"/>
<path d="M0.6 -12.8 C3.3 -9.8 4.5 -5.2 4.5 -1 L3.4 9.2 L1.2 9.2 C2.2 3 2.2 -6 0.6 -12.8 Z" fill="#6f9fb5"/>
<path d="M0 -13.5 C2.3 -11.3 3.6 -8.8 4.1 -6.2 L-4.1 -6.2 C-3.6 -8.8 -2.3 -11.3 0 -13.5 Z" fill="#e5452b"/>
<circle cx="0" cy="-1.8" r="2.1" fill="#2a4858" stroke="#d8ecf3" stroke-width="0.9"/>
<path d="M-1.1 5.5 L1.1 5.5 L1.1 12.5 L-1.1 12.5 Z" fill="#cf2a2a"/>
</g>
</svg>
<div style="position:absolute;left:2797.30px;top:1733.84px;font-family:'Liberation Mono', monospace;font-size:19.0px;letter-spacing:-0.492px;line-height:30px;white-space:pre;color:#e3e3e3;-webkit-text-stroke:0.1px"><span style="color:#e3e3e3;">COMPONENT RENDER: urlParams: </span><span style="display:inline-block;width:27.2px;height:1px;position:relative"><svg style="position:absolute;left:7.9px;top:-12.5px" width="9.5" height="13" viewBox="0 0 10 14" preserveAspectRatio="none"><path d="M0 0 L10 7 L0 14 Z" fill="#d6d6d6"/></svg></span><span style="color:#e3e3e3;font-style:italic;">{</span><span style="color:#a0a0a0;font-style:italic;">days</span><span style="color:#e3e3e3;font-style:italic;">: </span><span style="color:#e3e3e3;font-style:italic;">Array(1)</span><span style="color:#e3e3e3;font-style:italic;">, </span><span style="color:#a0a0a0;font-style:italic;">severity</span><span style="color:#e3e3e3;font-style:italic;">: </span><span style="color:#e3e3e3;font-style:italic;">Array(2)</span><span style="color:#e3e3e3;font-style:italic;">, </span><span style="color:#a0a0a0;font-style:italic;">state</span><span style="color:#e3e3e3;font-style:italic;">: </span><span style="color:#e3e3e3;font-style:italic;">Array(1)</span><span style="color:#e3e3e3;font-style:italic;">}</span></div>
<div style="position:absolute;left:3982.10px;top:1731.74px;font-family:'Liberation Mono', monospace;font-size:19.0px;letter-spacing:-0.492px;line-height:30px;white-space:pre;color:#a8c7fa;text-decoration:underline;text-decoration-thickness:1px;text-underline-offset:2.5px">IncidentsPage.tsx:49</div>
<div style="position:absolute;left:2763.60px;top:1766.00px;width:1442.60px;height:2.00px;background:#4f4f4f"></div>
<svg style="position:absolute;left:2761.8px;top:1774.20px" width="23" height="23" viewBox="0 0 23 23">
<circle cx="9.6" cy="4.8" r="0.9" fill="#e8e8e8"/><circle cx="5.3" cy="8.6" r="0.7" fill="#9a9a9a"/><circle cx="7.6" cy="8.4" r="0.5" fill="#777"/><circle cx="16.9" cy="16.4" r="0.9" fill="#e8e8e8"/><circle cx="19.1" cy="12.2" r="0.6" fill="#888"/>
<g transform="translate(13.6,10.6) rotate(45) scale(0.93)">
<path d="M-4.3 0.5 L-8.2 7 L-7.8 10.2 L-3.6 7.2 Z" fill="#d42a2a"/>
<path d="M4.3 0.5 L8.2 7 L7.8 10.2 L3.6 7.2 Z" fill="#c62323"/>
<path d="M-2.9 9 L2.9 9 L0.8 15.8 L-0.8 15.8 Z" fill="#fcd94a"/>
<path d="M0 -13.5 C3.2 -10.5 4.5 -5.5 4.5 -1 L3.4 9.2 L-3.4 9.2 L-4.5 -1 C-4.5 -5.5 -3.2 -10.5 0 -13.5 Z" fill="#a9d2e3"/>
<path d="M0.6 -12.8 C3.3 -9.8 4.5 -5.2 4.5 -1 L3.4 9.2 L1.2 9.2 C2.2 3 2.2 -6 0.6 -12.8 Z" fill="#6f9fb5"/>
<path d="M0 -13.5 C2.3 -11.3 3.6 -8.8 4.1 -6.2 L-4.1 -6.2 C-3.6 -8.8 -2.3 -11.3 0 -13.5 Z" fill="#e5452b"/>
<circle cx="0" cy="-1.8" r="2.1" fill="#2a4858" stroke="#d8ecf3" stroke-width="0.9"/>
<path d="M-1.1 5.5 L1.1 5.5 L1.1 12.5 L-1.1 12.5 Z" fill="#cf2a2a"/>
</g>
</svg>
<div style="position:absolute;left:2797.30px;top:1772.64px;font-family:'Liberation Mono', monospace;font-size:19.0px;letter-spacing:-0.492px;line-height:30px;white-space:pre;color:#e3e3e3;-webkit-text-stroke:0.1px"><span style="color:#e3e3e3;">REDUX STATE: incidentsActiveFilters from Redux:</span></div>
<div style="position:absolute;left:2763.60px;top:1796.44px;font-family:'Liberation Mono', monospace;font-size:19.0px;letter-spacing:-0.492px;line-height:30px;white-space:pre;color:#e3e3e3;-webkit-text-stroke:0.1px"><span style="display:inline-block;width:27.2px;height:1px;position:relative"><svg style="position:absolute;left:7.9px;top:-12.5px" width="9.5" height="13" viewBox="0 0 10 14" preserveAspectRatio="none"><path d="M0 0 L10 7 L0 14 Z" fill="#d6d6d6"/></svg></span><span style="color:#e3e3e3;font-style:italic;">{</span><span style="color:#a0a0a0;font-style:italic;">days</span><span style="color:#e3e3e3;font-style:italic;">: </span><span style="color:#e3e3e3;font-style:italic;">Array(1)</span><span style="color:#e3e3e3;font-style:italic;">, </span><span style="color:#a0a0a0;font-style:italic;">severity</span><span style="color:#e3e3e3;font-style:italic;">: </span><span style="color:#e3e3e3;font-style:italic;">Array(2)</span><span style="color:#e3e3e3;font-style:italic;">, </span><span style="color:#a0a0a0;font-style:italic;">state</span><span style="color:#e3e3e3;font-style:italic;">: </span><span style="color:#e3e3e3;font-style:italic;">Array(1)</span><span style="color:#e3e3e3;font-style:italic;">, </span><span style="color:#a0a0a0;font-style:italic;">groupId</span><span style="color:#e3e3e3;font-style:italic;">: </span><span style="color:#e3e3e3;font-style:italic;">Array(0)</span><span style="color:#e3e3e3;font-style:italic;">}</span></div>
<div style="position:absolute;left:3982.10px;top:1772.04px;font-family:'Liberation Mono', monospace;font-size:19.0px;letter-spacing:-0.492px;line-height:30px;white-space:pre;color:#a8c7fa;text-decoration:underline;text-decoration-thickness:1px;text-underline-offset:2.5px">IncidentsPage.tsx:90</div>
<div style="position:absolute;left:2763.60px;top:1828.00px;width:1442.60px;height:2.00px;background:#4f4f4f"></div>
<svg style="position:absolute;left:2761.8px;top:1836.10px" width="23" height="23" viewBox="0 0 23 23">
<circle cx="9.6" cy="4.8" r="0.9" fill="#e8e8e8"/><circle cx="5.3" cy="8.6" r="0.7" fill="#9a9a9a"/><circle cx="7.6" cy="8.4" r="0.5" fill="#777"/><circle cx="16.9" cy="16.4" r="0.9" fill="#e8e8e8"/><circle cx="19.1" cy="12.2" r="0.6" fill="#888"/>
<g transform="translate(13.6,10.6) rotate(45) scale(0.93)">
<path d="M-4.3 0.5 L-8.2 7 L-7.8 10.2 L-3.6 7.2 Z" fill="#d42a2a"/>
<path d="M4.3 0.5 L8.2 7 L7.8 10.2 L3.6 7.2 Z" fill="#c62323"/>
<path d="M-2.9 9 L2.9 9 L0.8 15.8 L-0.8 15.8 Z" fill="#fcd94a"/>
<path d="M0 -13.5 C3.2 -10.5 4.5 -5.5 4.5 -1 L3.4 9.2 L-3.4 9.2 L-4.5 -1 C-4.5 -5.5 -3.2 -10.5 0 -13.5 Z" fill="#a9d2e3"/>
<path d="M0.6 -12.8 C3.3 -9.8 4.5 -5.2 4.5 -1 L3.4 9.2 L1.2 9.2 C2.2 3 2.2 -6 0.6 -12.8 Z" fill="#6f9fb5"/>
<path d="M0 -13.5 C2.3 -11.3 3.6 -8.8 4.1 -6.2 L-4.1 -6.2 C-3.6 -8.8 -2.3 -11.3 0 -13.5 Z" fill="#e5452b"/>
<circle cx="0" cy="-1.8" r="2.1" fill="#2a4858" stroke="#d8ecf3" stroke-width="0.9"/>
<path d="M-1.1 5.5 L1.1 5.5 L1.1 12.5 L-1.1 12.5 Z" fill="#cf2a2a"/>
</g>
</svg>
<div style="position:absolute;left:2797.30px;top:1834.54px;font-family:'Liberation Mono', monospace;font-size:19.0px;letter-spacing:-0.492px;line-height:30px;white-space:pre;color:#e3e3e3;-webkit-text-stroke:0.1px"><span style="color:#e3e3e3;">REDUX STATE: incidentsInitialState from Redux:</span></div>
<div style="position:absolute;left:2763.60px;top:1858.34px;font-family:'Liberation Mono', monospace;font-size:19.0px;letter-spacing:-0.492px;line-height:30px;white-space:pre;color:#e3e3e3;-webkit-text-stroke:0.1px"><span style="display:inline-block;width:27.2px;height:1px;position:relative"><svg style="position:absolute;left:7.9px;top:-12.5px" width="9.5" height="13" viewBox="0 0 10 14" preserveAspectRatio="none"><path d="M0 0 L10 7 L0 14 Z" fill="#d6d6d6"/></svg></span><span style="color:#e3e3e3;font-style:italic;">{</span><span style="color:#a0a0a0;font-style:italic;">days</span><span style="color:#e3e3e3;font-style:italic;">: </span><span style="color:#e3e3e3;font-style:italic;">Array(1)</span><span style="color:#e3e3e3;font-style:italic;">, </span><span style="color:#a0a0a0;font-style:italic;">severity</span><span style="color:#e3e3e3;font-style:italic;">: </span><span style="color:#e3e3e3;font-style:italic;">Array(2)</span><span style="color:#e3e3e3;font-style:italic;">, </span><span style="color:#a0a0a0;font-style:italic;">state</span><span style="color:#e3e3e3;font-style:italic;">: </span><span style="color:#e3e3e3;font-style:italic;">Array(1)</span><span style="color:#e3e3e3;font-style:italic;">, </span><span style="color:#a0a0a0;font-style:italic;">groupId</span><span style="color:#e3e3e3;font-style:italic;">: </span><span style="color:#e3e3e3;font-style:italic;">Array(0)</span><span style="color:#e3e3e3;font-style:italic;">}</span></div>
<div style="position:absolute;left:3982.10px;top:1833.94px;font-family:'Liberation Mono', monospace;font-size:19.0px;letter-spacing:-0.492px;line-height:30px;white-space:pre;color:#a8c7fa;text-decoration:underline;text-decoration-thickness:1px;text-underline-offset:2.5px">IncidentsPage.tsx:91</div>
<div style="position:absolute;left:2763.60px;top:1890.00px;width:1442.60px;height:2.00px;background:#4f4f4f"></div>
<svg style="position:absolute;left:2761.8px;top:1898.70px" width="23" height="23" viewBox="0 0 23 23">
<circle cx="9.6" cy="4.8" r="0.9" fill="#e8e8e8"/><circle cx="5.3" cy="8.6" r="0.7" fill="#9a9a9a"/><circle cx="7.6" cy="8.4" r="0.5" fill="#777"/><circle cx="16.9" cy="16.4" r="0.9" fill="#e8e8e8"/><circle cx="19.1" cy="12.2" r="0.6" fill="#888"/>
<g transform="translate(13.6,10.6) rotate(45) scale(0.93)">
<path d="M-4.3 0.5 L-8.2 7 L-7.8 10.2 L-3.6 7.2 Z" fill="#d42a2a"/>
<path d="M4.3 0.5 L8.2 7 L7.8 10.2 L3.6 7.2 Z" fill="#c62323"/>
<path d="M-2.9 9 L2.9 9 L0.8 15.8 L-0.8 15.8 Z" fill="#fcd94a"/>
<path d="M0 -13.5 C3.2 -10.5 4.5 -5.5 4.5 -1 L3.4 9.2 L-3.4 9.2 L-4.5 -1 C-4.5 -5.5 -3.2 -10.5 0 -13.5 Z" fill="#a9d2e3"/>
<path d="M0.6 -12.8 C3.3 -9.8 4.5 -5.2 4.5 -1 L3.4 9.2 L1.2 9.2 C2.2 3 2.2 -6 0.6 -12.8 Z" fill="#6f9fb5"/>
<path d="M0 -13.5 C2.3 -11.3 3.6 -8.8 4.1 -6.2 L-4.1 -6.2 C-3.6 -8.8 -2.3 -11.3 0 -13.5 Z" fill="#e5452b"/>
<circle cx="0" cy="-1.8" r="2.1" fill="#2a4858" stroke="#d8ecf3" stroke-width="0.9"/>
<path d="M-1.1 5.5 L1.1 5.5 L1.1 12.5 L-1.1 12.5 Z" fill="#cf2a2a"/>
</g>
</svg>
<div style="position:absolute;left:2797.30px;top:1897.44px;font-family:'Liberation Mono', monospace;font-size:19.0px;letter-spacing:-0.492px;line-height:30px;white-space:pre;color:#e3e3e3;-webkit-text-stroke:0.1px"><span style="color:#e3e3e3;">COMPONENT RENDER: urlParams: </span><span style="display:inline-block;width:27.2px;height:1px;position:relative"><svg style="position:absolute;left:7.9px;top:-12.5px" width="9.5" height="13" viewBox="0 0 10 14" preserveAspectRatio="none"><path d="M0 0 L10 7 L0 14 Z" fill="#d6d6d6"/></svg></span><span style="color:#e3e3e3;font-style:italic;">{</span><span style="color:#a0a0a0;font-style:italic;">days</span><span style="color:#e3e3e3;font-style:italic;">: </span><span style="color:#e3e3e3;font-style:italic;">Array(1)</span><span style="color:#e3e3e3;font-style:italic;">, </span><span style="color:#a0a0a0;font-style:italic;">severity</span><span style="color:#e3e3e3;font-style:italic;">: </span><span style="color:#e3e3e3;font-style:italic;">Array(2)</span><span style="color:#e3e3e3;font-style:italic;">, </span><span style="color:#a0a0a0;font-style:italic;">state</span><span style="color:#e3e3e3;font-style:italic;">: </span><span style="color:#e3e3e3;font-style:italic;">Array(1)</span><span style="color:#e3e3e3;font-style:italic;">}</span></div>
<div style="position:absolute;left:3982.10px;top:1895.34px;font-family:'Liberation Mono', monospace;font-size:19.0px;letter-spacing:-0.492px;line-height:30px;white-space:pre;color:#a8c7fa;text-decoration:underline;text-decoration-thickness:1px;text-underline-offset:2.5px">IncidentsPage.tsx:49</div>
<div style="position:absolute;left:2763.60px;top:1930.00px;width:1442.60px;height:2.00px;background:#4f4f4f"></div>
<svg style="position:absolute;left:2761.8px;top:1937.30px" width="23" height="23" viewBox="0 0 23 23">
<circle cx="9.6" cy="4.8" r="0.9" fill="#e8e8e8"/><circle cx="5.3" cy="8.6" r="0.7" fill="#9a9a9a"/><circle cx="7.6" cy="8.4" r="0.5" fill="#777"/><circle cx="16.9" cy="16.4" r="0.9" fill="#e8e8e8"/><circle cx="19.1" cy="12.2" r="0.6" fill="#888"/>
<g transform="translate(13.6,10.6) rotate(45) scale(0.93)">
<path d="M-4.3 0.5 L-8.2 7 L-7.8 10.2 L-3.6 7.2 Z" fill="#d42a2a"/>
<path d="M4.3 0.5 L8.2 7 L7.8 10.2 L3.6 7.2 Z" fill="#c62323"/>
<path d="M-2.9 9 L2.9 9 L0.8 15.8 L-0.8 15.8 Z" fill="#fcd94a"/>
<path d="M0 -13.5 C3.2 -10.5 4.5 -5.5 4.5 -1 L3.4 9.2 L-3.4 9.2 L-4.5 -1 C-4.5 -5.5 -3.2 -10.5 0 -13.5 Z" fill="#a9d2e3"/>
<path d="M0.6 -12.8 C3.3 -9.8 4.5 -5.2 4.5 -1 L3.4 9.2 L1.2 9.2 C2.2 3 2.2 -6 0.6 -12.8 Z" fill="#6f9fb5"/>
<path d="M0 -13.5 C2.3 -11.3 3.6 -8.8 4.1 -6.2 L-4.1 -6.2 C-3.6 -8.8 -2.3 -11.3 0 -13.5 Z" fill="#e5452b"/>
<circle cx="0" cy="-1.8" r="2.1" fill="#2a4858" stroke="#d8ecf3" stroke-width="0.9"/>
<path d="M-1.1 5.5 L1.1 5.5 L1.1 12.5 L-1.1 12.5 Z" fill="#cf2a2a"/>
</g>
</svg>
<div style="position:absolute;left:2797.30px;top:1935.74px;font-family:'Liberation Mono', monospace;font-size:19.0px;letter-spacing:-0.492px;line-height:30px;white-space:pre;color:#e3e3e3;-webkit-text-stroke:0.1px"><span style="color:#e3e3e3;">REDUX STATE: incidentsActiveFilters from Redux:</span></div>
<div style="position:absolute;left:2763.60px;top:1959.54px;font-family:'Liberation Mono', monospace;font-size:19.0px;letter-spacing:-0.492px;line-height:30px;white-space:pre;color:#e3e3e3;-webkit-text-stroke:0.1px"><span style="display:inline-block;width:27.2px;height:1px;position:relative"><svg style="position:absolute;left:7.9px;top:-12.5px" width="9.5" height="13" viewBox="0 0 10 14" preserveAspectRatio="none"><path d="M0 0 L10 7 L0 14 Z" fill="#d6d6d6"/></svg></span><span style="color:#e3e3e3;font-style:italic;">{</span><span style="color:#a0a0a0;font-style:italic;">days</span><span style="color:#e3e3e3;font-style:italic;">: </span><span style="color:#e3e3e3;font-style:italic;">Array(1)</span><span style="color:#e3e3e3;font-style:italic;">, </span><span style="color:#a0a0a0;font-style:italic;">severity</span><span style="color:#e3e3e3;font-style:italic;">: </span><span style="color:#e3e3e3;font-style:italic;">Array(2)</span><span style="color:#e3e3e3;font-style:italic;">, </span><span style="color:#a0a0a0;font-style:italic;">state</span><span style="color:#e3e3e3;font-style:italic;">: </span><span style="color:#e3e3e3;font-style:italic;">Array(1)</span><span style="color:#e3e3e3;font-style:italic;">, </span><span style="color:#a0a0a0;font-style:italic;">groupId</span><span style="color:#e3e3e3;font-style:italic;">: </span><span style="color:#e3e3e3;font-style:italic;">Array(0)</span><span style="color:#e3e3e3;font-style:italic;">}</span></div>
<div style="position:absolute;left:3982.10px;top:1935.14px;font-family:'Liberation Mono', monospace;font-size:19.0px;letter-spacing:-0.492px;line-height:30px;white-space:pre;color:#a8c7fa;text-decoration:underline;text-decoration-thickness:1px;text-underline-offset:2.5px">IncidentsPage.tsx:90</div>
<div style="position:absolute;left:2763.60px;top:1959.54px;font-family:'Liberation Mono', monospace;font-size:19.0px;letter-spacing:-0.492px;line-height:30px;white-space:pre;color:#e3e3e3;-webkit-text-stroke:0.1px"><span style="display:inline-block;width:27.2px;height:1px;position:relative"><svg style="position:absolute;left:7.9px;top:-12.5px" width="9.5" height="13" viewBox="0 0 10 14" preserveAspectRatio="none"><path d="M0 0 L10 7 L0 14 Z" fill="#d6d6d6"/></svg></span><span style="color:#e3e3e3;font-style:italic;">{</span><span style="color:#a0a0a0;font-style:italic;">days</span><span style="color:#e3e3e3;font-style:italic;">: </span><span style="color:#e3e3e3;font-style:italic;">Array(1)</span><span style="color:#e3e3e3;font-style:italic;">, </span><span style="color:#a0a0a0;font-style:italic;">severity</span><span style="color:#e3e3e3;font-style:italic;">: </span><span style="color:#e3e3e3;font-style:italic;">Array(2)</span><span style="color:#e3e3e3;font-style:italic;">, </span><span style="color:#a0a0a0;font-style:italic;">state</span><span style="color:#e3e3e3;font-style:italic;">: </span><span style="color:#e3e3e3;font-style:italic;">Array(1)</span><span style="color:#e3e3e3;font-style:italic;">, </span><span style="color:#a0a0a0;font-style:italic;">groupId</span><span style="color:#e3e3e3;font-style:italic;">: </span><span style="color:#e3e3e3;font-style:italic;">Array(0)</span><span style="color:#e3e3e3;font-style:italic;">}</span></div>
</div>
</body></html>
